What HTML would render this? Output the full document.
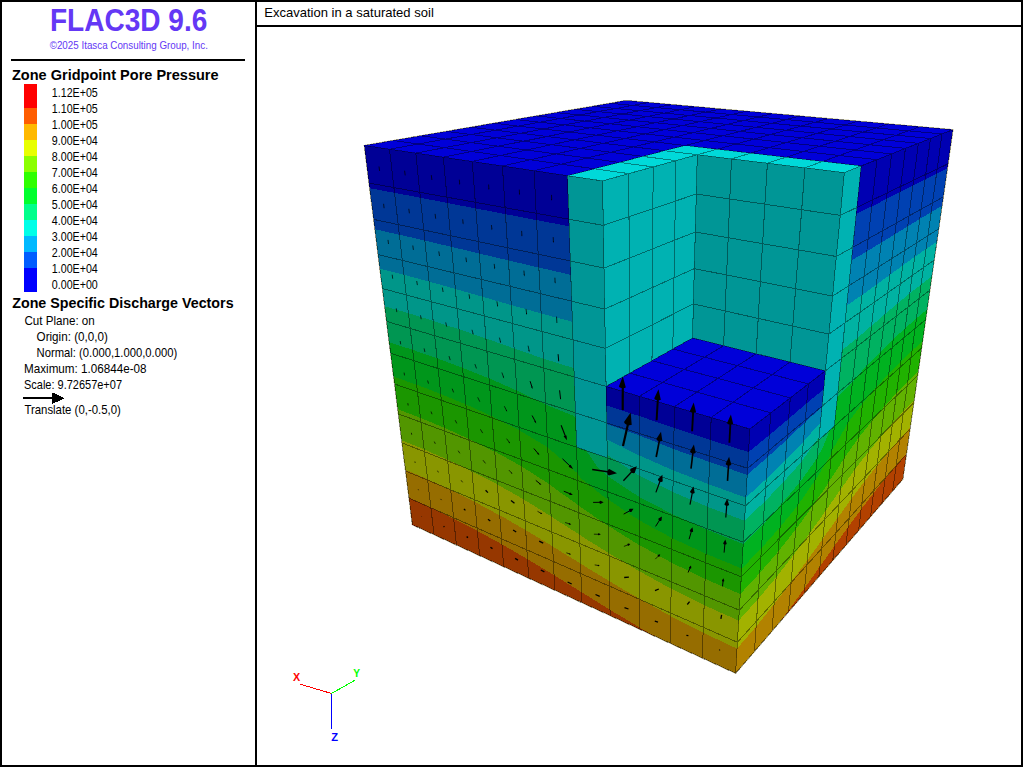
<!DOCTYPE html>
<html lang="en"><head><meta charset="utf-8"><title>Excavation in a saturated soil</title>
<style>html,body{margin:0;padding:0;background:#fff;overflow:hidden}svg{display:block}</style></head>
<body>
<svg width="1024" height="768" viewBox="0 0 1024 768" font-family="'Liberation Sans', sans-serif">
<rect width="1024" height="768" fill="#fff"/>
<g shape-rendering="crispEdges" fill="#000">
<rect x="0" y="0" width="1023" height="2"/><rect x="0" y="765" width="1023" height="2"/>
<rect x="0" y="0" width="2" height="767"/><rect x="1021" y="0" width="2" height="767"/>
<rect x="255" y="0" width="2" height="767"/><rect x="255" y="25" width="768" height="2"/>
<rect x="11" y="59" width="234" height="2"/>
<rect x="24" y="84" width="13" height="24" fill="#ff0000"/>
<rect x="24" y="108" width="13" height="16" fill="#ff5d00"/>
<rect x="24" y="124" width="13" height="16" fill="#ffb900"/>
<rect x="24" y="140" width="13" height="16" fill="#e8ff00"/>
<rect x="24" y="156" width="13" height="16" fill="#8bff00"/>
<rect x="24" y="172" width="13" height="16" fill="#2eff00"/>
<rect x="24" y="188" width="13" height="16" fill="#00ff2e"/>
<rect x="24" y="204" width="13" height="16" fill="#00ff8b"/>
<rect x="24" y="220" width="13" height="16" fill="#00ffe8"/>
<rect x="24" y="236" width="13" height="16" fill="#00b9ff"/>
<rect x="24" y="252" width="13" height="16" fill="#005dff"/>
<rect x="24" y="268" width="13" height="24" fill="#0000ff"/>
<rect x="23" y="397" width="32" height="2"/><path d="M64.6,398.2 L52.2,392.4 L52.2,404Z"/>
</g>
<text x="49.9" y="30.9" font-size="30.6" font-weight="bold" textLength="157.4" lengthAdjust="spacingAndGlyphs" fill="#6438f5">FLAC3D 9.6</text>
<text x="49.7" y="48.9" font-size="10.1" textLength="158.2" lengthAdjust="spacingAndGlyphs" fill="#6438f5">©2025 Itasca Consulting Group, Inc.</text>
<text x="12" y="79.7" font-size="14.8" font-weight="bold" textLength="206.6" lengthAdjust="spacingAndGlyphs" fill="#000">Zone Gridpoint Pore Pressure</text>
<text x="51.8" y="96.7" font-size="12.2" textLength="46" lengthAdjust="spacingAndGlyphs" fill="#000">1.12E+05</text>
<text x="51.8" y="112.7" font-size="12.2" textLength="46" lengthAdjust="spacingAndGlyphs" fill="#000">1.10E+05</text>
<text x="51.8" y="128.7" font-size="12.2" textLength="46" lengthAdjust="spacingAndGlyphs" fill="#000">1.00E+05</text>
<text x="51.8" y="144.7" font-size="12.2" textLength="46" lengthAdjust="spacingAndGlyphs" fill="#000">9.00E+04</text>
<text x="51.8" y="160.7" font-size="12.2" textLength="46" lengthAdjust="spacingAndGlyphs" fill="#000">8.00E+04</text>
<text x="51.8" y="176.7" font-size="12.2" textLength="46" lengthAdjust="spacingAndGlyphs" fill="#000">7.00E+04</text>
<text x="51.8" y="192.7" font-size="12.2" textLength="46" lengthAdjust="spacingAndGlyphs" fill="#000">6.00E+04</text>
<text x="51.8" y="208.7" font-size="12.2" textLength="46" lengthAdjust="spacingAndGlyphs" fill="#000">5.00E+04</text>
<text x="51.8" y="224.7" font-size="12.2" textLength="46" lengthAdjust="spacingAndGlyphs" fill="#000">4.00E+04</text>
<text x="51.8" y="240.7" font-size="12.2" textLength="46" lengthAdjust="spacingAndGlyphs" fill="#000">3.00E+04</text>
<text x="51.8" y="256.7" font-size="12.2" textLength="46" lengthAdjust="spacingAndGlyphs" fill="#000">2.00E+04</text>
<text x="51.8" y="272.7" font-size="12.2" textLength="46" lengthAdjust="spacingAndGlyphs" fill="#000">1.00E+04</text>
<text x="51.8" y="288.7" font-size="12.2" textLength="46" lengthAdjust="spacingAndGlyphs" fill="#000">0.00E+00</text>
<text x="12.2" y="307.8" font-size="14.8" font-weight="bold" textLength="221.4" lengthAdjust="spacingAndGlyphs" fill="#000">Zone Specific Discharge Vectors</text>
<text x="24.4" y="325.3" font-size="12.2" textLength="70.4" lengthAdjust="spacingAndGlyphs" fill="#000">Cut Plane: on</text>
<text x="36.6" y="341" font-size="12.2" textLength="71.2" lengthAdjust="spacingAndGlyphs" fill="#000">Origin: (0,0,0)</text>
<text x="36.6" y="357" font-size="12.2" textLength="140.6" lengthAdjust="spacingAndGlyphs" fill="#000">Normal: (0.000,1.000,0.000)</text>
<text x="24" y="372.9" font-size="12.2" textLength="122.6" lengthAdjust="spacingAndGlyphs" fill="#000">Maximum: 1.06844e-08</text>
<text x="24" y="388.9" font-size="12.2" textLength="98" lengthAdjust="spacingAndGlyphs" fill="#000">Scale: 9.72657e+07</text>
<text x="24.4" y="414.3" font-size="12.2" textLength="96.4" lengthAdjust="spacingAndGlyphs" fill="#000">Translate (0,-0.5,0)</text>
<text x="264.2" y="16.7" font-size="12.2" textLength="169.6" lengthAdjust="spacingAndGlyphs" fill="#000">Excavation in a saturated soil</text>
<g shape-rendering="crispEdges">
<path fill="none" stroke="#d9d5b5" stroke-opacity="0.7" stroke-width="1.8" d="M364.3,145.5 626.3,100.5 952.9,129.7 902.8,479.1 735.6,673.3 412.4,524.7Z"/>
<path fill="#009696" d="M602.5,180.9 567.4,175.7 568.9,219.2 603.3,225.4ZM603.3,225.4 568.9,219.2 570.3,261 604,268.1ZM604,268.1 570.3,261 571.7,301.2 604.7,309.1ZM604.7,309.1 571.7,301.2 573,339.8 605.4,348.5ZM605.4,348.5 573,339.8 574.2,377 606.1,386.4ZM606.1,386.4 574.2,377 575.4,412.8 606.7,422.9ZM606.7,422.9 575.4,412.8 576.6,447.3 607.3,457.9ZM844.3,172.6 804.9,167.8 801.7,209.7 840.3,215.4ZM840.3,215.4 801.7,209.7 798.6,249.9 836.3,256.5ZM836.3,256.5 798.6,249.9 795.6,288.7 832.6,296.1ZM832.6,296.1 795.6,288.7 792.8,326.1 828.9,334.1ZM828.9,334.1 792.8,326.1 790,362 825.4,370.8ZM804.9,167.8 767.4,163.2 764.9,204.2 801.7,209.7ZM801.7,209.7 764.9,204.2 762.6,243.7 798.6,249.9ZM798.6,249.9 762.6,243.7 760.3,281.7 795.6,288.7ZM795.6,288.7 760.3,281.7 758.2,318.4 792.8,326.1ZM792.8,326.1 758.2,318.4 756.1,353.7 790,362ZM767.4,163.2 731.5,158.9 729.8,199 764.9,204.2ZM764.9,204.2 729.8,199 728.2,237.7 762.6,243.7ZM762.6,243.7 728.2,237.7 726.6,275 760.3,281.7ZM760.3,281.7 726.6,275 725.1,311 758.2,318.4ZM758.2,318.4 725.1,311 723.6,345.7 756.1,353.7ZM731.5,158.9 697.3,154.7 696.3,194 729.8,199ZM729.8,199 696.3,194 695.3,232 728.2,237.7ZM728.2,237.7 695.3,232 694.3,268.6 726.6,275ZM726.6,275 694.3,268.6 693.4,303.9 725.1,311ZM725.1,311 693.4,303.9 692.5,338 723.6,345.7Z"/>
<path fill="#00b2b2" d="M844.3,172.6 861.2,165.9 856.9,207.4 840.3,215.4ZM840.3,215.4 856.9,207.4 852.8,247.3 836.3,256.5ZM836.3,256.5 852.8,247.3 848.8,285.8 832.6,296.1ZM832.6,296.1 848.8,285.8 845,322.8 828.9,334.1ZM828.9,334.1 845,322.8 841.4,358.5 825.4,370.8ZM825.4,370.8 841.4,358.5 837.8,392.9 822.1,406.1ZM822.1,406.1 837.8,392.9 834.4,426.2 818.8,440.1ZM602.5,180.9 628.7,173.6 629,216.7 603.3,225.4ZM603.3,225.4 629,216.7 629.2,258.2 604,268.1ZM604,268.1 629.2,258.2 629.4,298 604.7,309.1ZM604.7,309.1 629.4,298 629.6,336.3 605.4,348.5ZM605.4,348.5 629.6,336.3 629.8,373.1 606.1,386.4ZM628.7,173.6 653.2,166.9 652.9,208.7 629,216.7ZM629,216.7 652.9,208.7 652.7,248.8 629.2,258.2ZM629.2,258.2 652.7,248.8 652.4,287.5 629.4,298ZM629.4,298 652.4,287.5 652.2,324.8 629.6,336.3ZM629.6,336.3 652.2,324.8 652,360.7 629.8,373.1ZM653.2,166.9 676,160.6 675.3,201.1 652.9,208.7ZM652.9,208.7 675.3,201.1 674.7,240.1 652.7,248.8ZM652.7,248.8 674.7,240.1 674,277.8 652.4,287.5ZM652.4,287.5 674,277.8 673.4,314 652.2,324.8ZM652.2,324.8 673.4,314 672.8,349 652,360.7ZM676,160.6 697.3,154.7 696.3,194 675.3,201.1ZM675.3,201.1 696.3,194 695.3,232 674.7,240.1ZM674.7,240.1 695.3,232 694.3,268.6 674,277.8ZM674,277.8 694.3,268.6 693.4,303.9 673.4,314ZM673.4,314 693.4,303.9 692.5,338 672.8,349Z"/>
<path fill="#00d9d9" d="M844.3,172.6 804.9,167.8 822.7,161.4 861.2,165.9ZM804.9,167.8 767.4,163.2 786,157.2 822.7,161.4ZM767.4,163.2 731.5,158.9 750.9,153.1 786,157.2ZM731.5,158.9 697.3,154.7 717.3,149.2 750.9,153.1ZM602.5,180.9 567.4,175.7 594.3,168.8 628.7,173.6ZM628.7,173.6 594.3,168.8 619.3,162.4 653.2,166.9ZM653.2,166.9 619.3,162.4 642.7,156.4 676,160.6ZM676,160.6 642.7,156.4 664.6,150.7 697.3,154.7ZM697.3,154.7 664.6,150.7 685.2,145.5 717.3,149.2Z"/>
<path fill="#000096" d="M749.9,429 711.2,417.5 709.8,456.1 747.6,468.3ZM711.2,417.5 674.4,406.7 673.8,444.5 709.8,456.1ZM674.4,406.7 639.4,396.3 639.4,433.4 673.8,444.5ZM639.4,396.3 606.1,386.4 606.7,422.9 639.4,433.4ZM567.4,175.7 534.1,170.7 536.2,213.3 568.9,219.2ZM568.9,219.2 536.2,213.3 538.2,254.2 570.3,261ZM534.1,170.7 502.4,166 505.1,207.7 536.2,213.3ZM536.2,213.3 505.1,207.7 507.6,247.8 538.2,254.2ZM502.4,166 472.2,161.5 475.3,202.3 505.1,207.7ZM505.1,207.7 475.3,202.3 478.4,241.6 507.6,247.8ZM472.2,161.5 443.3,157.2 447,197.2 475.3,202.3ZM475.3,202.3 447,197.2 450.5,235.7 478.4,241.6ZM443.3,157.2 415.8,153.1 419.8,192.3 447,197.2ZM447,197.2 419.8,192.3 423.8,230 450.5,235.7ZM415.8,153.1 389.5,149.2 393.9,187.6 419.8,192.3ZM419.8,192.3 393.9,187.6 398.2,224.6 423.8,230ZM389.5,149.2 364.3,145.5 369,183.1 393.9,187.6ZM393.9,187.6 369,183.1 373.7,219.4 398.2,224.6Z"/>
<path fill="#0000b2" d="M749.9,429 770.8,412.9 768.2,451.1 747.6,468.3ZM770.8,412.9 790.3,397.9 787.3,435.1 768.2,451.1ZM790.3,397.9 808.4,383.9 805.3,420.1 787.3,435.1ZM808.4,383.9 825.4,370.8 822.1,406.1 805.3,420.1ZM861.2,165.9 876.9,159.7 872.5,199.9 856.9,207.4ZM856.9,207.4 872.5,199.9 868.2,238.7 852.8,247.3ZM876.9,159.7 891.6,153.9 887.1,193 872.5,199.9ZM872.5,199.9 887.1,193 882.7,230.7 868.2,238.7ZM891.6,153.9 905.4,148.4 900.7,186.4 887.1,193ZM887.1,193 900.7,186.4 896.3,223.1 882.7,230.7ZM905.4,148.4 918.4,143.3 913.6,180.2 900.7,186.4ZM900.7,186.4 913.6,180.2 909,215.9 896.3,223.1ZM918.4,143.3 930.5,138.5 925.7,174.4 913.6,180.2ZM913.6,180.2 925.7,174.4 921.1,209.2 909,215.9ZM930.5,138.5 942,133.9 937.2,169 925.7,174.4ZM925.7,174.4 937.2,169 932.5,202.9 921.1,209.2ZM942,133.9 952.9,129.7 948,163.8 937.2,169ZM937.2,169 948,163.8 943.3,196.9 932.5,202.9Z"/>
<path fill="#0000d9" d="M861.2,165.9 822.7,161.4 839.3,155.5 876.9,159.7ZM876.9,159.7 839.3,155.5 854.9,150 891.6,153.9ZM891.6,153.9 854.9,150 869.5,144.7 905.4,148.4ZM905.4,148.4 869.5,144.7 883.3,139.8 918.4,143.3ZM918.4,143.3 883.3,139.8 896.2,135.2 930.5,138.5ZM930.5,138.5 896.2,135.2 908.4,130.9 942,133.9ZM942,133.9 908.4,130.9 920,126.7 952.9,129.7ZM822.7,161.4 786,157.2 803.4,151.5 839.3,155.5ZM839.3,155.5 803.4,151.5 819.7,146.2 854.9,150ZM854.9,150 819.7,146.2 835.1,141.2 869.5,144.7ZM869.5,144.7 835.1,141.2 849.6,136.5 883.3,139.8ZM883.3,139.8 849.6,136.5 863.2,132.1 896.2,135.2ZM896.2,135.2 863.2,132.1 876.1,127.9 908.4,130.9ZM908.4,130.9 876.1,127.9 888.3,123.9 920,126.7ZM786,157.2 750.9,153.1 769,147.7 803.4,151.5ZM803.4,151.5 769,147.7 786.1,142.6 819.7,146.2ZM819.7,146.2 786.1,142.6 802.1,137.8 835.1,141.2ZM835.1,141.2 802.1,137.8 817.2,133.3 849.6,136.5ZM849.6,136.5 817.2,133.3 831.5,129 863.2,132.1ZM863.2,132.1 831.5,129 845,125 876.1,127.9ZM876.1,127.9 845,125 857.8,121.2 888.3,123.9ZM750.9,153.1 717.3,149.2 736.1,144 769,147.7ZM769,147.7 736.1,144 753.8,139.1 786.1,142.6ZM786.1,142.6 753.8,139.1 770.4,134.6 802.1,137.8ZM802.1,137.8 770.4,134.6 786.1,130.2 817.2,133.3ZM817.2,133.3 786.1,130.2 801,126.1 831.5,129ZM831.5,129 801,126.1 815.1,122.2 845,125ZM845,125 815.1,122.2 828.4,118.6 857.8,121.2ZM717.3,149.2 685.2,145.5 704.6,140.5 736.1,144ZM736.1,144 704.6,140.5 722.8,135.8 753.8,139.1ZM753.8,139.1 722.8,135.8 740,131.4 770.4,134.6ZM770.4,134.6 740,131.4 756.2,127.3 786.1,130.2ZM786.1,130.2 756.2,127.3 771.6,123.3 801,126.1ZM801,126.1 771.6,123.3 786.2,119.6 815.1,122.2ZM815.1,122.2 786.2,119.6 800,116 828.4,118.6ZM567.4,175.7 534.1,170.7 561.5,164.2 594.3,168.8ZM594.3,168.8 561.5,164.2 587,158 619.3,162.4ZM619.3,162.4 587,158 610.9,152.3 642.7,156.4ZM642.7,156.4 610.9,152.3 633.4,146.9 664.6,150.7ZM664.6,150.7 633.4,146.9 654.4,141.9 685.2,145.5ZM685.2,145.5 654.4,141.9 674.3,137.1 704.6,140.5ZM704.6,140.5 674.3,137.1 693,132.7 722.8,135.8ZM722.8,135.8 693,132.7 710.7,128.4 740,131.4ZM740,131.4 710.7,128.4 727.4,124.4 756.2,127.3ZM756.2,127.3 727.4,124.4 743.3,120.6 771.6,123.3ZM771.6,123.3 743.3,120.6 758.3,117 786.2,119.6ZM786.2,119.6 758.3,117 772.6,113.6 800,116ZM534.1,170.7 502.4,166 530.2,159.8 561.5,164.2ZM561.5,164.2 530.2,159.8 556.2,153.9 587,158ZM587,158 556.2,153.9 580.5,148.4 610.9,152.3ZM610.9,152.3 580.5,148.4 603.4,143.3 633.4,146.9ZM633.4,146.9 603.4,143.3 624.9,138.5 654.4,141.9ZM654.4,141.9 624.9,138.5 645.2,133.9 674.3,137.1ZM674.3,137.1 645.2,133.9 664.4,129.6 693,132.7ZM693,132.7 664.4,129.6 682.5,125.5 710.7,128.4ZM710.7,128.4 682.5,125.5 699.7,121.7 727.4,124.4ZM727.4,124.4 699.7,121.7 716,118 743.3,120.6ZM743.3,120.6 716,118 731.4,114.5 758.3,117ZM758.3,117 731.4,114.5 746.2,111.2 772.6,113.6ZM502.4,166 472.2,161.5 500.3,155.5 530.2,159.8ZM530.2,159.8 500.3,155.5 526.7,150 556.2,153.9ZM556.2,153.9 526.7,150 551.4,144.7 580.5,148.4ZM580.5,148.4 551.4,144.7 574.7,139.8 603.4,143.3ZM603.4,143.3 574.7,139.8 596.6,135.2 624.9,138.5ZM624.9,138.5 596.6,135.2 617.3,130.8 645.2,133.9ZM645.2,133.9 617.3,130.8 636.9,126.7 664.4,129.6ZM664.4,129.6 636.9,126.7 655.4,122.7 682.5,125.5ZM682.5,125.5 655.4,122.7 673,119 699.7,121.7ZM699.7,121.7 673,119 689.6,115.5 716,118ZM716,118 689.6,115.5 705.5,112.1 731.4,114.5ZM731.4,114.5 705.5,112.1 720.6,109 746.2,111.2ZM472.2,161.5 443.3,157.2 471.8,151.5 500.3,155.5ZM500.3,155.5 471.8,151.5 498.4,146.2 526.7,150ZM526.7,150 498.4,146.2 523.5,141.2 551.4,144.7ZM551.4,144.7 523.5,141.2 547.1,136.5 574.7,139.8ZM574.7,139.8 547.1,136.5 569.4,132 596.6,135.2ZM596.6,135.2 569.4,132 590.5,127.8 617.3,130.8ZM617.3,130.8 590.5,127.8 610.4,123.8 636.9,126.7ZM636.9,126.7 610.4,123.8 629.3,120.1 655.4,122.7ZM655.4,122.7 629.3,120.1 647.2,116.5 673,119ZM673,119 647.2,116.5 664.2,113.1 689.6,115.5ZM689.6,115.5 664.2,113.1 680.4,109.8 705.5,112.1ZM705.5,112.1 680.4,109.8 695.8,106.7 720.6,109ZM443.3,157.2 415.8,153.1 444.5,147.7 471.8,151.5ZM471.8,151.5 444.5,147.7 471.4,142.6 498.4,146.2ZM498.4,146.2 471.4,142.6 496.8,137.8 523.5,141.2ZM523.5,141.2 496.8,137.8 520.7,133.3 547.1,136.5ZM547.1,136.5 520.7,133.3 543.3,129 569.4,132ZM569.4,132 543.3,129 564.6,124.9 590.5,127.8ZM590.5,127.8 564.6,124.9 584.8,121.1 610.4,123.8ZM610.4,123.8 584.8,121.1 604,117.5 629.3,120.1ZM629.3,120.1 604,117.5 622.3,114 647.2,116.5ZM647.2,116.5 622.3,114 639.6,110.7 664.2,113.1ZM664.2,113.1 639.6,110.7 656.1,107.6 680.4,109.8ZM680.4,109.8 656.1,107.6 671.9,104.6 695.8,106.7ZM415.8,153.1 389.5,149.2 418.3,144 444.5,147.7ZM444.5,147.7 418.3,144 445.5,139.1 471.4,142.6ZM471.4,142.6 445.5,139.1 471.1,134.5 496.8,137.8ZM496.8,137.8 471.1,134.5 495.3,130.2 520.7,133.3ZM520.7,133.3 495.3,130.2 518.1,126.1 543.3,129ZM543.3,129 518.1,126.1 539.7,122.2 564.6,124.9ZM564.6,124.9 539.7,122.2 560.2,118.5 584.8,121.1ZM584.8,121.1 560.2,118.5 579.7,115 604,117.5ZM604,117.5 579.7,115 598.2,111.6 622.3,114ZM622.3,114 598.2,111.6 615.9,108.5 639.6,110.7ZM639.6,110.7 615.9,108.5 632.7,105.4 656.1,107.6ZM656.1,107.6 632.7,105.4 648.7,102.5 671.9,104.6ZM389.5,149.2 364.3,145.5 393.3,140.5 418.3,144ZM418.3,144 393.3,140.5 420.6,135.8 445.5,139.1ZM445.5,139.1 420.6,135.8 446.4,131.4 471.1,134.5ZM471.1,134.5 446.4,131.4 470.8,127.2 495.3,130.2ZM495.3,130.2 470.8,127.2 493.9,123.2 518.1,126.1ZM518.1,126.1 493.9,123.2 515.7,119.5 539.7,122.2ZM539.7,122.2 515.7,119.5 536.5,115.9 560.2,118.5ZM560.2,118.5 536.5,115.9 556.2,112.6 579.7,115ZM579.7,115 556.2,112.6 575,109.3 598.2,111.6ZM598.2,111.6 575,109.3 592.9,106.3 615.9,108.5ZM615.9,108.5 592.9,106.3 610,103.3 632.7,105.4ZM632.7,105.4 610,103.3 626.3,100.5 648.7,102.5ZM749.9,429 711.2,417.5 733,402.2 770.8,412.9ZM770.8,412.9 733,402.2 753.3,387.9 790.3,397.9ZM790.3,397.9 753.3,387.9 772.2,374.6 808.4,383.9ZM808.4,383.9 772.2,374.6 790,362 825.4,370.8ZM711.2,417.5 674.4,406.7 696.9,392.1 733,402.2ZM733,402.2 696.9,392.1 718,378.4 753.3,387.9ZM753.3,387.9 718,378.4 737.6,365.7 772.2,374.6ZM772.2,374.6 737.6,365.7 756.1,353.7 790,362ZM674.4,406.7 639.4,396.3 662.6,382.4 696.9,392.1ZM696.9,392.1 662.6,382.4 684.2,369.4 718,378.4ZM718,378.4 684.2,369.4 704.5,357.2 737.6,365.7ZM737.6,365.7 704.5,357.2 723.6,345.7 756.1,353.7ZM639.4,396.3 606.1,386.4 629.8,373.1 662.6,382.4ZM662.6,382.4 629.8,373.1 652,360.7 684.2,369.4ZM684.2,369.4 652,360.7 672.8,349 704.5,357.2ZM704.5,357.2 672.8,349 692.5,338 723.6,345.7Z"/>
<path fill="#003796" d="M710.4,440 709.8,456.1 726.2,445ZM709.8,456.1 747.6,468.3 732.3,446.9 726.2,445ZM747.6,468.3 748.5,452.1 732.3,446.9ZM747.6,468.3 709.8,456.1 708.4,493 745.4,505.9ZM674,428 673.8,444.5 689.6,433.1ZM673.8,444.5 709.8,456.1 694.5,434.8 689.6,433.1ZM709.8,456.1 710.4,440 694.5,434.8ZM709.8,456.1 673.8,444.5 673.1,480.8 708.4,493ZM639.4,416.1 639.4,433.4 655.1,421.4ZM639.4,433.4 673.8,444.5 658.1,422.5 655.1,421.4ZM673.8,444.5 674,428 658.1,422.5ZM673.8,444.5 639.4,433.4 639.4,469.1 673.1,480.8ZM606.4,405.5 606.7,422.9 622,410.5ZM606.7,422.9 639.4,433.4 623.5,411 622,410.5ZM639.4,433.4 639.4,416.1 623.5,411ZM639.4,433.4 606.7,422.9 607.3,457.9 639.4,469.1ZM541.8,221.1 553.2,237.1 563.6,225.2ZM536.5,220.1 538.2,254.2 553.2,237.1 541.8,221.1ZM538.2,254.2 570.3,261 553.2,237.1ZM570.3,261 569.1,226.2 563.6,225.2 553.2,237.1ZM570.3,261 538.2,254.2 540.2,293.6 571.7,301.2ZM510.4,215.1 521.6,230.9 531.4,219.1ZM505.5,214.2 507.6,247.8 521.6,230.9 510.4,215.1ZM507.6,247.8 538.2,254.2 521.6,230.9ZM538.2,254.2 536.5,220.1 531.4,219.1 521.6,230.9ZM538.2,254.2 507.6,247.8 510.1,286.3 540.2,293.6ZM480.3,209.3 491.4,225 500.7,213.2ZM475.8,208.4 478.4,241.6 491.4,225 480.3,209.3ZM478.4,241.6 507.6,247.8 491.4,225ZM507.6,247.8 505.5,214.2 500.7,213.2 491.4,225ZM507.6,247.8 478.4,241.6 481.3,279.4 510.1,286.3ZM451.6,203.8 462.7,219.3 471.4,207.6ZM447.5,203 450.5,235.7 462.7,219.3 451.6,203.8ZM450.5,235.7 478.4,241.6 462.7,219.3ZM478.4,241.6 475.8,208.4 471.4,207.6 462.7,219.3ZM478.4,241.6 450.5,235.7 453.9,272.8 481.3,279.4ZM424.2,198.5 435.1,213.9 443.4,202.2ZM420.4,197.8 423.8,230 435.1,213.9 424.2,198.5ZM423.8,230 450.5,235.7 435.1,213.9ZM450.5,235.7 447.5,203 443.4,202.2 435.1,213.9ZM450.5,235.7 423.8,230 427.5,266.5 453.9,272.8ZM398.1,193.5 408.8,208.8 416.7,197ZM394.5,192.8 398.2,224.6 408.8,208.8 398.1,193.5ZM398.2,224.6 423.8,230 408.8,208.8ZM423.8,230 420.4,197.8 416.7,197 408.8,208.8ZM423.8,230 398.2,224.6 402.3,260.4 427.5,266.5ZM373.1,188.8 383.6,203.8 391,192.2ZM369.7,188.2 373.7,219.4 383.6,203.8 373.1,188.8ZM373.7,219.4 398.2,224.6 383.6,203.8ZM398.2,224.6 394.5,192.8 391,192.2 383.6,203.8ZM398.2,224.6 373.7,219.4 378.1,254.6 402.3,260.4Z"/>
<path fill="#0041b2" d="M769.3,435.1 768.2,451.1 760.7,442.1ZM768.2,451.1 747.6,468.3 757.4,444.8 760.7,442.1ZM747.6,468.3 748.5,452.1 757.4,444.8ZM747.6,468.3 768.2,451.1 765.6,487.8 745.4,505.9ZM788.6,418.8 787.3,435.1 780.4,425.7ZM787.3,435.1 768.2,451.1 777.7,428 780.4,425.7ZM768.2,451.1 769.3,435.1 777.7,428ZM768.2,451.1 787.3,435.1 784.5,470.8 765.6,487.8ZM806.7,403.2 805.3,420.1 798.6,410.2ZM805.3,420.1 787.3,435.1 797,411.6 798.6,410.2ZM787.3,435.1 788.6,418.8 797,411.6ZM787.3,435.1 805.3,420.1 802.2,455 784.5,470.8ZM823.7,389.3 822.1,406.1 815.7,395.8ZM822.1,406.1 805.3,420.1 814.9,396.4 815.7,395.8ZM805.3,420.1 806.7,403.2 814.9,396.4ZM805.3,420.1 822.1,406.1 818.8,440.1 802.2,455ZM869.3,207.6 862.7,223.5 858.9,212.8ZM871.8,206.4 868.2,238.7 862.7,223.5 869.3,207.6ZM868.2,238.7 852.8,247.3 862.7,223.5ZM852.8,247.3 856.2,214.1 858.9,212.8 862.7,223.5ZM852.8,247.3 868.2,238.7 864.1,276.1 848.8,285.8ZM884.1,200.2 877.7,215.7 874.2,205.2ZM886.3,199.1 882.7,230.7 877.7,215.7 884.1,200.2ZM882.7,230.7 868.2,238.7 877.7,215.7ZM868.2,238.7 871.8,206.4 874.2,205.2 877.7,215.7ZM868.2,238.7 882.7,230.7 878.4,267 864.1,276.1ZM898,193.2 891.8,208.4 888.6,197.9ZM900,192.1 896.3,223.1 891.8,208.4 898,193.2ZM896.3,223.1 882.7,230.7 891.8,208.4ZM882.7,230.7 886.3,199.1 888.6,197.9 891.8,208.4ZM882.7,230.7 896.3,223.1 891.9,258.5 878.4,267ZM911.1,186.6 905,201.5 902.1,191.1ZM912.9,185.6 909,215.9 905,201.5 911.1,186.6ZM909,215.9 896.3,223.1 905,201.5ZM896.3,223.1 900,192.1 902.1,191.1 905,201.5ZM896.3,223.1 909,215.9 904.6,250.5 891.9,258.5ZM923.4,180.4 917.4,195.1 914.8,184.7ZM925.1,179.5 921.1,209.2 917.4,195.1 923.4,180.4ZM921.1,209.2 909,215.9 917.4,195.1ZM909,215.9 912.9,185.6 914.8,184.7 917.4,195.1ZM909,215.9 921.1,209.2 916.6,242.9 904.6,250.5ZM935,174.6 929.2,189 926.7,178.6ZM936.5,173.8 932.5,202.9 929.2,189 935,174.6ZM932.5,202.9 921.1,209.2 929.2,189ZM921.1,209.2 925.1,179.5 926.7,178.6 929.2,189ZM921.1,209.2 932.5,202.9 927.9,235.7 916.6,242.9ZM945.9,169.2 940.3,183.2 938.1,173ZM947.3,168.4 943.3,196.9 940.3,183.2 945.9,169.2ZM943.3,196.9 932.5,202.9 940.3,183.2ZM932.5,202.9 936.5,173.8 938.1,173 940.3,183.2ZM932.5,202.9 943.3,196.9 938.7,228.9 927.9,235.7Z"/>
<path fill="#006d96" d="M715.5,464.1 727.5,480.9 740.7,472.6ZM709.5,462.1 708.4,493 727.5,480.9 715.5,464.1ZM708.4,493 745.4,505.9 727.5,480.9ZM745.4,505.9 747.2,474.8 740.7,472.6 727.5,480.9ZM678.2,450.7 691,468.7 704,460ZM673.7,449 673.1,480.8 691,468.7 678.2,450.7ZM673.1,480.8 708.4,493 691,468.7ZM708.4,493 709.5,462.1 704,460 691,468.7ZM641.6,436.4 656.2,457 669.7,447.4ZM639.4,435.5 639.4,469.1 656.2,457 641.6,436.4ZM639.4,469.1 673.1,480.8 656.2,457ZM673.1,480.8 673.7,449 669.7,447.4 656.2,457ZM607.9,424.5 623,445.9 637.7,434.7ZM606.7,424 607.3,457.9 623,445.9 607.9,424.5ZM607.3,457.9 639.4,469.1 623,445.9ZM639.4,469.1 639.4,435.5 637.7,434.7 623,445.9ZM549.4,269.9 554.9,277.7 559.9,272.3ZM538.9,267.6 540.2,293.6 554.9,277.7 549.4,269.9ZM540.2,293.6 571.7,301.2 554.9,277.7ZM571.7,301.2 570.8,274.8 559.9,272.3 554.9,277.7ZM571.7,301.2 540.2,293.6 542,331.5 573,339.8ZM518.3,262.7 523.9,270.6 528.7,265.1ZM508.4,260.4 510.1,286.3 523.9,270.6 518.3,262.7ZM510.1,286.3 540.2,293.6 523.9,270.6ZM540.2,293.6 538.9,267.6 528.7,265.1 523.9,270.6ZM540.2,293.6 510.1,286.3 512.5,323.5 542,331.5ZM488.4,255.7 494.2,263.9 499,258.2ZM479.3,253.5 481.3,279.4 494.2,263.9 488.4,255.7ZM481.3,279.4 510.1,286.3 494.2,263.9ZM510.1,286.3 508.4,260.4 499,258.2 494.2,263.9ZM510.1,286.3 481.3,279.4 484.2,315.9 512.5,323.5ZM459.7,248.8 465.9,257.5 470.7,251.4ZM451.5,246.8 453.9,272.8 465.9,257.5 459.7,248.8ZM453.9,272.8 481.3,279.4 465.9,257.5ZM481.3,279.4 479.3,253.5 470.7,251.4 465.9,257.5ZM481.3,279.4 453.9,272.8 457.1,308.6 484.2,315.9ZM432.4,242.4 438.8,251.4 443.6,245ZM424.8,240.6 427.5,266.5 438.8,251.4 432.4,242.4ZM427.5,266.5 453.9,272.8 438.8,251.4ZM453.9,272.8 451.5,246.8 443.6,245 438.8,251.4ZM453.9,272.8 427.5,266.5 431.2,301.7 457.1,308.6ZM406.4,236.3 412.8,245.5 417.5,238.9ZM399.3,234.7 402.3,260.4 412.8,245.5 406.4,236.3ZM402.3,260.4 427.5,266.5 412.8,245.5ZM427.5,266.5 424.8,240.6 417.5,238.9 412.8,245.5ZM427.5,266.5 402.3,260.4 406.3,295 431.2,301.7ZM381.6,230.7 388,239.9 392.5,233.2ZM374.9,229.2 378.1,254.6 388,239.9 381.6,230.7ZM378.1,254.6 402.3,260.4 388,239.9ZM402.3,260.4 399.3,234.7 392.5,233.2 388,239.9ZM402.3,260.4 378.1,254.6 382.4,288.5 406.3,295Z"/>
<path fill="#0082b2" d="M764.5,459.8 756.9,478.3 750.8,471.7ZM767.8,457 765.6,487.8 756.9,478.3 764.5,459.8ZM765.6,487.8 745.4,505.9 756.9,478.3ZM745.4,505.9 747.2,474.8 750.8,471.7 756.9,478.3ZM784.6,441.8 776.6,461.2 770.8,454.2ZM787,439.6 784.5,470.8 776.6,461.2 784.6,441.8ZM784.5,470.8 765.6,487.8 776.6,461.2ZM765.6,487.8 767.8,457 770.8,454.2 776.6,461.2ZM804,423.3 795,445.3 789.1,437.4ZM805.1,422.2 802.2,455 795,445.3 804,423.3ZM802.2,455 784.5,470.8 795,445.3ZM784.5,470.8 787,439.6 789.1,437.4 795,445.3ZM821.3,407.8 812.2,430.4 806,421.2ZM821.9,407.2 818.8,440.1 812.2,430.4 821.3,407.8ZM818.8,440.1 802.2,455 812.2,430.4ZM802.2,455 805.1,422.2 806,421.2 812.2,430.4ZM861.8,254.4 858.6,262.1 856.7,257.3ZM866.8,251.4 864.1,276.1 858.6,262.1 861.8,254.4ZM864.1,276.1 848.8,285.8 858.6,262.1ZM848.8,285.8 851.4,260.5 856.7,257.3 858.6,262.1ZM848.8,285.8 864.1,276.1 860.1,312.2 845,322.8ZM876.6,245.4 873.4,253.2 871.7,248.4ZM881.3,242.6 878.4,267 873.4,253.2 876.6,245.4ZM878.4,267 864.1,276.1 873.4,253.2ZM864.1,276.1 866.8,251.4 871.7,248.4 873.4,253.2ZM864.1,276.1 878.4,267 874.3,302.2 860.1,312.2ZM890.7,236.8 887.4,244.9 885.7,239.8ZM894.9,234.2 891.9,258.5 887.4,244.9 890.7,236.8ZM891.9,258.5 878.4,267 887.4,244.9ZM878.4,267 881.3,242.6 885.7,239.8 887.4,244.9ZM878.4,267 891.9,258.5 887.7,292.8 874.3,302.2ZM903.9,228.7 900.5,237.1 898.9,231.7ZM907.7,226.3 904.6,250.5 900.5,237.1 903.9,228.7ZM904.6,250.5 891.9,258.5 900.5,237.1ZM891.9,258.5 894.9,234.2 898.9,231.7 900.5,237.1ZM891.9,258.5 904.6,250.5 900.3,283.9 887.7,292.8ZM916.4,221 912.9,229.7 911.3,224.1ZM919.8,218.9 916.6,242.9 912.9,229.7 916.4,221ZM916.6,242.9 904.6,250.5 912.9,229.7ZM904.6,250.5 907.7,226.3 911.3,224.1 912.9,229.7ZM904.6,250.5 916.6,242.9 912.2,275.5 900.3,283.9ZM928.1,214 924.6,222.8 923.1,217ZM931.2,212.1 927.9,235.7 924.6,222.8 928.1,214ZM927.9,235.7 916.6,242.9 924.6,222.8ZM916.6,242.9 919.8,218.9 923.1,217 924.6,222.8ZM916.6,242.9 927.9,235.7 923.5,267.6 912.2,275.5ZM939.1,207.5 935.7,216.2 934.3,210.3ZM942,205.8 938.7,228.9 935.7,216.2 939.1,207.5ZM938.7,228.9 927.9,235.7 935.7,216.2ZM927.9,235.7 931.2,212.1 934.3,210.3 935.7,216.2ZM927.9,235.7 938.7,228.9 934.2,260 923.5,267.6Z"/>
<path fill="#009689" d="M708.7,484.3 708.4,493 717.4,487.3ZM708.4,493 745.4,505.9 737.2,494.5 717.4,487.3ZM745.4,505.9 745.9,497.5 737.2,494.5ZM745.4,505.9 708.4,493 707,528.6 743.3,542.1ZM673.3,470.3 673.1,480.8 683,474.1ZM673.1,480.8 708.4,493 699.6,480.7 683,474.1ZM708.4,493 708.7,484.3 699.6,480.7ZM708.4,493 673.1,480.8 672.5,515.7 707,528.6ZM639.4,455.5 639.4,469.1 651.3,460.6ZM639.4,469.1 673.1,480.8 662.3,465.6 651.3,460.6ZM673.1,480.8 673.3,470.3 662.3,465.6ZM673.1,480.8 639.4,469.1 639.5,503.5 672.5,515.7ZM607,439.8 607.3,457.9 622,446.7ZM607.3,457.9 639.4,469.1 624.7,448.3 622,446.7ZM639.4,469.1 639.4,455.5 624.7,448.3ZM639.4,469.1 607.3,457.9 607.9,491.8 639.5,503.5ZM541.1,313.5 542,331.5 555.8,317.4ZM542,331.5 573,339.8 557.4,317.8 555.8,317.4ZM573,339.8 572.4,321.8 557.4,317.8ZM573,339.8 542,331.5 543.8,368 574.2,377ZM511.3,305.1 512.5,323.5 525.8,309.1ZM512.5,323.5 542,331.5 526.3,309.3 525.8,309.1ZM542,331.5 541.1,313.5 526.3,309.3ZM542,331.5 512.5,323.5 514.8,359.4 543.8,368ZM496.4,300.8 496.9,301.4 497.3,301ZM482.7,296.8 484.2,315.9 496.9,301.4 496.4,300.8ZM484.2,315.9 512.5,323.5 496.9,301.4ZM512.5,323.5 511.3,305.1 497.3,301 496.9,301.4ZM512.5,323.5 484.2,315.9 486.9,351.1 514.8,359.4ZM467.7,292.5 469,294.3 470,293.1ZM455.3,288.9 457.1,308.6 469,294.3 467.7,292.5ZM457.1,308.6 484.2,315.9 469,294.3ZM484.2,315.9 482.7,296.8 470,293.1 469,294.3ZM484.2,315.9 457.1,308.6 460.3,343.2 486.9,351.1ZM440.4,284.7 442.3,287.5 443.7,285.7ZM429.1,281.6 431.2,301.7 442.3,287.5 440.4,284.7ZM431.2,301.7 457.1,308.6 442.3,287.5ZM457.1,308.6 455.3,288.9 443.7,285.7 442.3,287.5ZM457.1,308.6 431.2,301.7 434.7,335.7 460.3,343.2ZM414.4,277.6 416.7,281 418.4,278.7ZM404,274.8 406.3,295 416.7,281 414.4,277.6ZM406.3,295 431.2,301.7 416.7,281ZM431.2,301.7 429.1,281.6 418.4,278.7 416.7,281ZM431.2,301.7 406.3,295 410.2,328.4 434.7,335.7ZM389.7,271.1 392.2,274.7 394,272.2ZM379.9,268.6 382.4,288.5 392.2,274.7 389.7,271.1ZM382.4,288.5 406.3,295 392.2,274.7ZM406.3,295 404,274.8 394,272.2 392.2,274.7ZM406.3,295 382.4,288.5 386.6,321.4 410.2,328.4Z"/>
<path fill="#00b2a2" d="M766.2,479 765.6,487.8 761.5,483.3ZM765.6,487.8 745.4,505.9 750.7,493.2 761.5,483.3ZM745.4,505.9 745.9,497.5 750.7,493.2ZM745.4,505.9 765.6,487.8 763.2,523 743.3,542.1ZM785.3,460.5 784.5,470.8 780.1,465.5ZM784.5,470.8 765.6,487.8 771.2,474.3 780.1,465.5ZM765.6,487.8 766.2,479 771.2,474.3ZM765.6,487.8 784.5,470.8 781.8,505.3 763.2,523ZM803.4,441.7 802.2,455 797.1,448.2ZM802.2,455 784.5,470.8 791.2,454.5 797.1,448.2ZM784.5,470.8 785.3,460.5 791.2,454.5ZM784.5,470.8 802.2,455 799.3,488.6 781.8,505.3ZM820.5,422.5 818.8,440.1 812.6,431ZM818.8,440.1 802.2,455 811.2,432.9 812.6,431ZM802.2,455 803.4,441.7 811.2,432.9ZM802.2,455 818.8,440.1 815.7,473 799.3,488.6ZM862,295 860.1,312.2 854.9,299.9ZM860.1,312.2 845,322.8 854.2,300.5 854.9,299.9ZM845,322.8 846.8,305.5 854.2,300.5ZM845,322.8 860.1,312.2 856.3,347 841.4,358.5ZM876.4,284.7 874.3,302.2 869.4,289.7ZM874.3,302.2 860.1,312.2 869.2,289.9 869.4,289.7ZM860.1,312.2 862,295 869.2,289.9ZM860.1,312.2 874.3,302.2 870.4,336.1 856.3,347ZM883.4,279.5 883.2,280.2 883,279.8ZM889.9,274.8 887.7,292.8 883.2,280.2 883.4,279.5ZM887.7,292.8 874.3,302.2 883.2,280.2ZM874.3,302.2 876.4,284.7 883,279.8 883.2,280.2ZM874.3,302.2 887.7,292.8 883.6,325.9 870.4,336.1ZM896.9,269.7 896.2,271.5 895.9,270.4ZM902.7,265.5 900.3,283.9 896.2,271.5 896.9,269.7ZM900.3,283.9 887.7,292.8 896.2,271.5ZM887.7,292.8 889.9,274.8 895.9,270.4 896.2,271.5ZM887.7,292.8 900.3,283.9 896.2,316.2 883.6,325.9ZM909.6,260.6 908.5,263.3 908,261.7ZM914.7,256.9 912.2,275.5 908.5,263.3 909.6,260.6ZM912.2,275.5 900.3,283.9 908.5,263.3ZM900.3,283.9 902.7,265.5 908,261.7 908.5,263.3ZM900.3,283.9 912.2,275.5 908,307.1 896.2,316.2ZM921.4,252.2 920.1,255.5 919.6,253.5ZM926.1,249 923.5,267.6 920.1,255.5 921.4,252.2ZM923.5,267.6 912.2,275.5 920.1,255.5ZM912.2,275.5 914.7,256.9 919.6,253.5 920.1,255.5ZM912.2,275.5 923.5,267.6 919.2,298.4 908,307.1ZM932.5,244.7 931.1,248.1 930.6,246ZM936.8,241.8 934.2,260 931.1,248.1 932.5,244.7ZM934.2,260 923.5,267.6 931.1,248.1ZM923.5,267.6 926.1,249 930.6,246 931.1,248.1ZM923.5,267.6 934.2,260 929.9,290.2 919.2,298.4Z"/>
<path fill="#009652" d="M722,512.2 725.8,517.5 729.8,515.1ZM707.8,506.9 707,528.6 725.8,517.5 722,512.2ZM707,528.6 743.3,542.1 725.8,517.5ZM743.3,542.1 744.5,520.7 729.8,515.1 725.8,517.5ZM743.3,542.1 707,528.6 705.7,562.8 741.3,576.8ZM684.6,497.1 690,504.6 695.1,501.4ZM672.9,492.1 672.5,515.7 690,504.6 684.6,497.1ZM672.5,515.7 707,528.6 690,504.6ZM707,528.6 707.8,506.9 695.1,501.4 690,504.6ZM707,528.6 672.5,515.7 671.8,549.4 705.7,562.8ZM646.7,479.4 655.9,492.4 663.4,487.4ZM639.4,475.8 639.5,503.5 655.9,492.4 646.7,479.4ZM639.5,503.5 672.5,515.7 655.9,492.4ZM672.5,515.7 672.9,492.1 663.4,487.4 655.9,492.4ZM607.3,455.3 607.3,457.9 609.5,456.3ZM607.3,457.9 618.6,461.9 609.5,456.3ZM618.6,461.9 607.3,457.9 623.4,480.7 634.5,472.6ZM607.3,457.9 607.9,491.8 623.4,480.7ZM607.9,491.8 639.5,503.5 623.4,480.7ZM639.5,503.5 639.4,475.8 634.5,472.6 623.4,480.7ZM607.3,457.9 576.6,447.3 577.7,480.6 607.9,491.8ZM543.4,358.6 543.8,368 551.1,361ZM543.8,368 574.2,377 566.4,365.8 551.1,361ZM574.2,377 573.9,368.2 566.4,365.8ZM574.2,377 543.8,368 545.6,403.1 575.4,412.8ZM575.4,412.8 545.6,403.1 547.2,437.1 576.6,447.3ZM514.1,348.4 514.8,359.4 522.6,351.3ZM514.8,359.4 543.8,368 535.3,355.8 522.6,351.3ZM543.8,368 543.4,358.6 535.3,355.8ZM543.8,368 514.8,359.4 517,393.9 545.6,403.1ZM545.6,403.1 517,393.9 519.1,427.3 547.2,437.1ZM485.9,338.5 486.9,351.1 495.5,341.8ZM486.9,351.1 514.8,359.4 504.8,345.2 495.5,341.8ZM514.8,359.4 514.1,348.4 504.8,345.2ZM514.8,359.4 486.9,351.1 489.6,385.1 517,393.9ZM459,329.3 460.3,343.2 469.4,332.8ZM460.3,343.2 486.9,351.1 475.6,335 469.4,332.8ZM486.9,351.1 485.9,338.5 475.6,335ZM486.9,351.1 460.3,343.2 463.3,376.6 489.6,385.1ZM433.2,320.8 434.7,335.7 444.1,324.4ZM434.7,335.7 460.3,343.2 448,325.7 444.1,324.4ZM460.3,343.2 459,329.3 448,325.7ZM460.3,343.2 434.7,335.7 438.1,368.5 463.3,376.6ZM408.4,313.2 410.2,328.4 419.4,316.6ZM410.2,328.4 434.7,335.7 422,317.4 419.4,316.6ZM434.7,335.7 433.2,320.8 422,317.4ZM434.7,335.7 410.2,328.4 413.9,360.7 438.1,368.5ZM384.7,306.3 386.6,321.4 395.5,309.4ZM386.6,321.4 410.2,328.4 397.3,310 395.5,309.4ZM410.2,328.4 408.4,313.2 397.3,310ZM410.2,328.4 386.6,321.4 390.6,353.2 413.9,360.7Z"/>
<path fill="#00b261" d="M757,508.9 754.5,514.7 752.7,512.9ZM764.7,501.5 763.2,523 754.5,514.7 757,508.9ZM763.2,523 743.3,542.1 754.5,514.7ZM743.3,542.1 744.5,520.7 752.7,512.9 754.5,514.7ZM743.3,542.1 763.2,523 760.9,557 741.3,576.8ZM777.3,488.5 774,496.8 771.7,494.3ZM783.7,481.9 781.8,505.3 774,496.8 777.3,488.5ZM781.8,505.3 763.2,523 774,496.8ZM763.2,523 764.7,501.5 771.7,494.3 774,496.8ZM763.2,523 781.8,505.3 779.2,538.5 760.9,557ZM797.8,466 792.1,480 788.8,476ZM801.6,461.6 799.3,488.6 792.1,480 797.8,466ZM799.3,488.6 781.8,505.3 792.1,480ZM781.8,505.3 783.7,481.9 788.8,476 792.1,480ZM819,437.6 818.8,440.1 817.9,438.8ZM818.8,440.1 813,445.3 817.9,438.8ZM813,445.3 818.8,440.1 809.1,464.2 804.3,457.8ZM818.8,440.1 815.7,473 809.1,464.2ZM815.7,473 799.3,488.6 809.1,464.2ZM799.3,488.6 801.6,461.6 804.3,457.8 809.1,464.2ZM818.8,440.1 834.4,426.2 831.1,458.3 815.7,473ZM857.3,338 856.3,347 853.5,341ZM856.3,347 841.4,358.5 846,347.1 853.5,341ZM841.4,358.5 842.2,350.1 846,347.1ZM841.4,358.5 856.3,347 852.6,380.6 837.8,392.9ZM837.8,392.9 852.6,380.6 849,413.1 834.4,426.2ZM871.6,325.7 870.4,336.1 867.4,329.2ZM870.4,336.1 856.3,347 861.3,334.6 867.4,329.2ZM856.3,347 857.3,338 861.3,334.6ZM856.3,347 870.4,336.1 866.6,368.9 852.6,380.6ZM852.6,380.6 866.6,368.9 862.9,400.7 849,413.1ZM885.1,314 883.6,325.9 880.5,317.9ZM883.6,325.9 870.4,336.1 876.1,321.9 880.5,317.9ZM870.4,336.1 871.6,325.7 876.1,321.9ZM870.4,336.1 883.6,325.9 879.7,357.9 866.6,368.9ZM897.9,303.2 896.2,316.2 893,307.3ZM896.2,316.2 883.6,325.9 890,309.8 893,307.3ZM883.6,325.9 885.1,314 890,309.8ZM883.6,325.9 896.2,316.2 892.2,347.6 879.7,357.9ZM909.9,293.3 908,307.1 904.8,297.4ZM908,307.1 896.2,316.2 903,299 904.8,297.4ZM896.2,316.2 897.9,303.2 903,299ZM896.2,316.2 908,307.1 903.9,337.7 892.2,347.6ZM921.2,284.4 919.2,298.4 916.2,288.4ZM919.2,298.4 908,307.1 915,289.3 916.2,288.4ZM908,307.1 909.9,293.3 915,289.3ZM908,307.1 919.2,298.4 915.1,328.4 903.9,337.7ZM931.9,276.3 929.9,290.2 927,280ZM929.9,290.2 919.2,298.4 926.2,280.6 927,280ZM919.2,298.4 921.2,284.4 926.2,280.6ZM919.2,298.4 929.9,290.2 925.7,319.6 915.1,328.4Z"/>
<path fill="#00961b" d="M708.1,530 724.1,552.6 741.2,543.2ZM707,529.6 705.7,562.8 724.1,552.6 708.1,530ZM705.7,562.8 741.3,576.8 724.1,552.6ZM741.3,576.8 743.2,544 741.2,543.2 724.1,552.6ZM672.5,514.2 672.5,515.7 673.9,514.8ZM672.5,515.7 694.2,523.8 673.9,514.8ZM694.2,523.8 672.5,515.7 689.1,539.2 706,529.2ZM672.5,515.7 671.8,549.4 689.1,539.2ZM671.8,549.4 705.7,562.8 689.1,539.2ZM705.7,562.8 707,529.6 706,529.2 689.1,539.2ZM639.5,497.1 639.5,503.5 644.9,499.8ZM639.5,503.5 672.5,515.7 670.7,513.3 644.9,499.8ZM672.5,515.7 672.5,514.2 670.7,513.3ZM672.5,515.7 639.5,503.5 639.5,536.6 671.8,549.4ZM607.6,476.2 607.9,491.8 619,483.8ZM607.9,491.8 639.5,503.5 631.1,491.6 619,483.8ZM639.5,503.5 639.5,497.1 631.1,491.6ZM639.5,503.5 607.9,491.8 608.5,524.4 639.5,536.6ZM586.2,450.6 576.6,447.3 592.2,469.5 596.8,466ZM576.6,447.3 577.7,480.6 592.2,469.5ZM577.7,480.6 607.9,491.8 592.2,469.5ZM607.9,491.8 607.6,476.2 596.8,466 592.2,469.5ZM607.9,491.8 577.7,480.6 578.8,512.7 608.5,524.4ZM547,405.3 561.1,425.2 572.5,415.3ZM545.6,404.4 547.2,437.1 561.1,425.2 547,405.3ZM547.2,437.1 576.6,447.3 561.1,425.2ZM576.6,447.3 575.6,417.8 572.5,415.3 561.1,425.2ZM576.6,447.3 547.2,437.1 548.9,469.8 577.7,480.6ZM516.7,390.5 517,393.9 519.4,391.6ZM517,393.9 538.4,400.9 519.4,391.6ZM538.4,400.9 517,393.9 532.1,415.5 544.7,403.9ZM517,393.9 519.1,427.3 532.1,415.5ZM519.1,427.3 547.2,437.1 532.1,415.5ZM547.2,437.1 545.6,404.4 544.7,403.9 532.1,415.5ZM547.2,437.1 519.1,427.3 521.2,459.5 548.9,469.8ZM489.1,378.4 489.6,385.1 494.1,380.5ZM489.6,385.1 517,393.9 513.6,389.1 494.1,380.5ZM517,393.9 516.7,390.5 513.6,389.1ZM517,393.9 489.6,385.1 492.1,417.9 519.1,427.3ZM519.1,427.3 492.1,417.9 494.6,449.7 521.2,459.5ZM462.5,367.8 463.3,376.6 469.1,370.4ZM463.3,376.6 489.6,385.1 483.3,376.1 469.1,370.4ZM489.6,385.1 489.1,378.4 483.3,376.1ZM489.6,385.1 463.3,376.6 466.3,408.9 492.1,417.9ZM437.1,358.3 438.1,368.5 444.6,361.1ZM438.1,368.5 463.3,376.6 455.3,365.1 444.6,361.1ZM463.3,376.6 462.5,367.8 455.3,365.1ZM463.3,376.6 438.1,368.5 441.4,400.3 466.3,408.9ZM412.6,349.8 413.9,360.7 420.6,352.6ZM413.9,360.7 438.1,368.5 429.1,355.6 420.6,352.6ZM438.1,368.5 437.1,358.3 429.1,355.6ZM438.1,368.5 413.9,360.7 417.5,392 441.4,400.3ZM389.3,342.2 390.6,353.2 397.2,344.8ZM390.6,353.2 413.9,360.7 404.5,347.2 397.2,344.8ZM413.9,360.7 412.6,349.8 404.5,347.2ZM413.9,360.7 390.6,353.2 394.6,384 417.5,392Z"/>
<path fill="#00b220" d="M762.6,524.6 752.3,549.7 744.3,542.9ZM763.1,524.1 760.9,557 752.3,549.7 762.6,524.6ZM760.9,557 741.3,576.8 752.3,549.7ZM741.3,576.8 743.2,544 744.3,542.9 752.3,549.7ZM782,503.7 781.8,505.3 781.2,504.6ZM781.8,505.3 770.2,516.4 781.2,504.6ZM770.2,516.4 781.8,505.3 771.4,530.9 763.7,523.5ZM781.8,505.3 779.2,538.5 771.4,530.9ZM779.2,538.5 760.9,557 771.4,530.9ZM760.9,557 763.1,524.1 763.7,523.5 771.4,530.9ZM799.8,482.4 799.3,488.6 796.9,485.8ZM799.3,488.6 781.8,505.3 782.9,502.6 796.9,485.8ZM781.8,505.3 782,503.7 782.9,502.6ZM781.8,505.3 799.3,488.6 796.5,521.1 779.2,538.5ZM817.1,457.9 815.7,473 811,466.7ZM815.7,473 799.3,488.6 804.4,475.9 811,466.7ZM799.3,488.6 799.8,482.4 804.4,475.9ZM799.3,488.6 815.7,473 812.6,504.7 796.5,521.1ZM829.5,430.5 834.4,426.2 825.1,449.5 823.2,446.7ZM834.4,426.2 831.1,458.3 825.1,449.5ZM831.1,458.3 815.7,473 825.1,449.5ZM815.7,473 817.1,457.9 823.2,446.7 825.1,449.5ZM815.7,473 831.1,458.3 827.9,489.4 812.6,504.7ZM851.7,382.7 843.6,403.2 839,395ZM852.5,381.8 849,413.1 843.6,403.2 851.7,382.7ZM849,413.1 834.4,426.2 843.6,403.2ZM834.4,426.2 837.3,397.8 839,395 843.6,403.2ZM834.4,426.2 849,413.1 845.6,444.5 831.1,458.3ZM866.9,365.6 866.6,368.9 865.6,367ZM866.6,368.9 856.1,377.7 865.6,367ZM856.1,377.7 866.6,368.9 857.9,390.9 852.9,381.2ZM866.6,368.9 862.9,400.7 857.9,390.9ZM862.9,400.7 849,413.1 857.9,390.9ZM849,413.1 852.5,381.8 852.9,381.2 857.9,390.9ZM849,413.1 862.9,400.7 859.3,431.4 845.6,444.5ZM880.5,351.6 879.7,357.9 878.1,354.1ZM879.7,357.9 866.6,368.9 868.5,364.1 878.1,354.1ZM866.6,368.9 866.9,365.6 868.5,364.1ZM866.6,368.9 879.7,357.9 875.9,389 862.9,400.7ZM862.9,400.7 875.9,389 872.2,419.1 859.3,431.4ZM893.2,339.3 892.2,347.6 890.1,342.3ZM892.2,347.6 879.7,357.9 883.3,349 890.1,342.3ZM879.7,357.9 880.5,351.6 883.3,349ZM879.7,357.9 892.2,347.6 888.3,377.9 875.9,389ZM905.2,328.2 903.9,337.7 901.7,331.5ZM903.9,337.7 892.2,347.6 896.6,336.1 901.7,331.5ZM892.2,347.6 893.2,339.3 896.6,336.1ZM892.2,347.6 903.9,337.7 900,367.4 888.3,377.9ZM916.5,318.3 915.1,328.4 912.8,321.5ZM915.1,328.4 903.9,337.7 908.9,325 912.8,321.5ZM903.9,337.7 905.2,328.2 908.9,325ZM903.9,337.7 915.1,328.4 911.1,357.5 900,367.4ZM927.1,309.4 925.7,319.6 923.5,312.5ZM925.7,319.6 915.1,328.4 920.2,315.2 923.5,312.5ZM915.1,328.4 916.5,318.3 920.2,315.2ZM915.1,328.4 925.7,319.6 921.6,348.1 911.1,357.5Z"/>
<path fill="#1b9600" d="M706.1,553.8 705.7,562.8 715.2,557.6ZM705.7,562.8 741.3,576.8 732.8,564.8 715.2,557.6ZM741.3,576.8 741.7,568.5 732.8,564.8ZM741.3,576.8 705.7,562.8 704.5,595.7 739.3,610.2ZM672.1,538 671.8,549.4 682.7,543ZM671.8,549.4 705.7,562.8 696.1,549.2 682.7,543ZM705.7,562.8 706.1,553.8 696.1,549.2ZM705.7,562.8 671.8,549.4 671.3,581.8 704.5,595.7ZM639.5,520.4 639.5,536.6 653.2,527.9ZM639.5,536.6 671.8,549.4 658.7,530.8 653.2,527.9ZM671.8,549.4 672.1,538 658.7,530.8ZM671.8,549.4 639.5,536.6 639.5,568.5 671.3,581.8ZM617.9,506 623.7,514.1 626.6,512.2ZM608,499.4 608.5,524.4 623.7,514.1 617.9,506ZM608.5,524.4 639.5,536.6 623.7,514.1ZM639.5,536.6 639.5,520.4 626.6,512.2 623.7,514.1ZM639.5,536.6 608.5,524.4 609,555.8 639.5,568.5ZM577.5,473.3 577.7,480.6 580.8,478.2ZM577.7,480.6 589.2,484.8 580.8,478.2ZM589.2,484.8 577.7,480.6 593.1,502.4 602.6,495.6ZM577.7,480.6 578.8,512.7 593.1,502.4ZM578.8,512.7 608.5,524.4 593.1,502.4ZM608.5,524.4 608,499.4 602.6,495.6 593.1,502.4ZM608.5,524.4 578.8,512.7 579.9,543.7 609,555.8ZM547.7,447.4 548.9,469.8 561.7,459.4ZM548.9,469.8 577.7,480.6 564.8,462.1 561.7,459.4ZM577.7,480.6 577.5,473.3 564.8,462.1ZM577.7,480.6 548.9,469.8 550.4,501.4 578.8,512.7ZM522.5,432.2 533.9,448.5 540.5,442.9ZM519.3,430.2 521.2,459.5 533.9,448.5 522.5,432.2ZM521.2,459.5 548.9,469.8 533.9,448.5ZM548.9,469.8 547.7,447.4 540.5,442.9 533.9,448.5ZM548.9,469.8 521.2,459.5 523.2,490.7 550.4,501.4ZM492,416.2 492.1,417.9 493.2,416.9ZM492.1,417.9 502,421.4 493.2,416.9ZM502,421.4 492.1,417.9 506.6,438.7 517.2,429.1ZM492.1,417.9 494.6,449.7 506.6,438.7ZM494.6,449.7 521.2,459.5 506.6,438.7ZM521.2,459.5 519.3,430.2 517.2,429.1 506.6,438.7ZM521.2,459.5 494.6,449.7 497,480.4 523.2,490.7ZM465.8,404.4 466.3,408.9 469.3,405.9ZM466.3,408.9 492.1,417.9 490.5,415.6 469.3,405.9ZM492.1,417.9 492,416.2 490.5,415.6ZM492.1,417.9 466.3,408.9 469.1,440.2 494.6,449.7ZM494.6,449.7 469.1,440.2 471.9,470.4 497,480.4ZM440.7,394 441.4,400.3 445.5,395.9ZM441.4,400.3 466.3,408.9 461.9,402.8 445.5,395.9ZM466.3,408.9 465.8,404.4 461.9,402.8ZM466.3,408.9 441.4,400.3 444.6,431.1 469.1,440.2ZM416.7,384.7 417.5,392 422.1,386.8ZM417.5,392 441.4,400.3 435.6,392 422.1,386.8ZM441.4,400.3 440.7,394 435.6,392ZM441.4,400.3 417.5,392 421,422.3 444.6,431.1ZM393.6,376.6 394.6,384 399.1,378.5ZM394.6,384 417.5,392 411.1,382.8 399.1,378.5ZM417.5,392 416.7,384.7 411.1,382.8ZM417.5,392 394.6,384 398.4,413.9 421,422.3Z"/>
<path fill="#20b200" d="M761.5,548.1 760.9,557 756.5,553.3ZM760.9,557 741.3,576.8 746.7,563.4 756.5,553.3ZM741.3,576.8 741.7,568.5 746.7,563.4ZM741.3,576.8 760.9,557 758.6,589.7 739.3,610.2ZM780.1,527.2 779.2,538.5 774.3,533.7ZM779.2,538.5 760.9,557 767,541.9 774.3,533.7ZM760.9,557 761.5,548.1 767,541.9ZM760.9,557 779.2,538.5 776.7,570.4 758.6,589.7ZM797.8,505.2 796.5,521.1 790.4,514.5ZM796.5,521.1 779.2,538.5 787.4,518.1 790.4,514.5ZM779.2,538.5 780.1,527.2 787.4,518.1ZM779.2,538.5 796.5,521.1 793.7,552.4 776.7,570.4ZM809.6,488.2 806.1,496.9 804.9,495.4ZM815,480.4 812.6,504.7 806.1,496.9 809.6,488.2ZM812.6,504.7 796.5,521.1 806.1,496.9ZM796.5,521.1 797.8,505.2 804.9,495.4 806.1,496.9ZM796.5,521.1 812.6,504.7 809.7,535.4 793.7,552.4ZM831.8,451.3 831.1,458.3 829.8,456.4ZM831.1,458.3 825.3,463.9 829.8,456.4ZM825.3,463.9 831.1,458.3 821.9,481.4 817.9,476ZM831.1,458.3 827.9,489.4 821.9,481.4ZM827.9,489.4 812.6,504.7 821.9,481.4ZM812.6,504.7 815,480.4 817.9,476 821.9,481.4ZM812.6,504.7 827.9,489.4 824.8,519.4 809.7,535.4ZM847.9,423 845.6,444.5 840.4,436ZM845.6,444.5 831.1,458.3 838.7,439 840.4,436ZM831.1,458.3 831.8,451.3 838.7,439ZM831.1,458.3 845.6,444.5 842.2,474.9 827.9,489.4ZM860.9,405.6 854.3,422.4 851.7,417.8ZM862.5,403.4 859.3,431.4 854.3,422.4 860.9,405.6ZM859.3,431.4 845.6,444.5 854.3,422.4ZM845.6,444.5 847.9,423 851.7,417.8 854.3,422.4ZM845.6,444.5 859.3,431.4 855.8,461.2 842.2,474.9ZM876.1,387.4 875.9,389 875.5,388.1ZM875.9,389 871.1,393.3 875.5,388.1ZM871.1,393.3 875.9,389 867.6,410.1 863.6,402.1ZM875.9,389 872.2,419.1 867.6,410.1ZM872.2,419.1 859.3,431.4 867.6,410.1ZM859.3,431.4 862.5,403.4 863.6,402.1 867.6,410.1ZM859.3,431.4 872.2,419.1 868.7,448.2 855.8,461.2ZM888.8,373.6 888.3,377.9 887.2,375.4ZM888.3,377.9 875.9,389 876.8,386.6 887.2,375.4ZM875.9,389 876.1,387.4 876.8,386.6ZM875.9,389 888.3,377.9 884.5,407.4 872.2,419.1ZM872.2,419.1 884.5,407.4 880.8,435.9 868.7,448.2ZM900.8,361.5 900,367.4 898.5,363.8ZM900,367.4 888.3,377.9 890.7,371.7 898.5,363.8ZM888.3,377.9 888.8,373.6 890.7,371.7ZM888.3,377.9 900,367.4 896.1,396.3 884.5,407.4ZM912,350.7 911.1,357.5 909.5,353.1ZM911.1,357.5 900,367.4 903.2,359.2 909.5,353.1ZM900,367.4 900.8,361.5 903.2,359.2ZM900,367.4 911.1,357.5 907.2,385.8 896.1,396.3ZM922.6,341.1 921.6,348.1 920.1,343.4ZM921.6,348.1 911.1,357.5 914.6,348.4 920.1,343.4ZM911.1,357.5 912,350.7 914.6,348.4ZM911.1,357.5 921.6,348.1 917.6,375.7 907.2,385.8Z"/>
<path fill="#529600" d="M722.5,586.4 722.5,586.4 722.5,586.4ZM705.1,578.9 704.5,595.7 722.5,586.4 722.5,586.4ZM704.5,595.7 739.3,610.2 722.5,586.4ZM739.3,610.2 740.2,594.1 722.5,586.4 722.5,586.4ZM739.3,610.2 704.5,595.7 703.3,627.3 737.4,642.3ZM686.3,569.8 688.1,572.5 689.8,571.5ZM671.6,562.7 671.3,581.8 688.1,572.5 686.3,569.8ZM671.3,581.8 704.5,595.7 688.1,572.5ZM704.5,595.7 705.1,578.9 689.8,571.5 688.1,572.5ZM704.5,595.7 671.3,581.8 670.7,613 703.3,627.3ZM649.2,550.4 655.3,559.1 659.9,556.4ZM639.5,545.1 639.5,568.5 655.3,559.1 649.2,550.4ZM639.5,568.5 671.3,581.8 655.3,559.1ZM671.3,581.8 671.6,562.7 659.9,556.4 655.3,559.1ZM671.3,581.8 639.5,568.5 639.5,599.3 670.7,613ZM610.3,527 623.9,546.4 632.5,541ZM608.5,525.9 609,555.8 623.9,546.4 610.3,527ZM609,555.8 639.5,568.5 623.9,546.4ZM639.5,568.5 639.5,545.1 632.5,541 623.9,546.4ZM639.5,568.5 609,555.8 609.6,586.2 639.5,599.3ZM578.6,505.4 578.8,512.7 583.6,509.2ZM578.8,512.7 603,522.2 583.6,509.2ZM603,522.2 578.8,512.7 593.9,534.2 607.3,525.1ZM578.8,512.7 579.9,543.7 593.9,534.2ZM579.9,543.7 609,555.8 593.9,534.2ZM609,555.8 608.5,525.9 607.3,525.1 593.9,534.2ZM549.6,484.3 550.4,501.4 561.2,493.2ZM550.4,501.4 578.8,512.7 568.8,498.3 561.2,493.2ZM578.8,512.7 578.6,505.4 568.8,498.3ZM578.8,512.7 550.4,501.4 551.9,532 579.9,543.7ZM529.4,471.4 535.8,480.4 539.2,477.7ZM521.6,466.4 523.2,490.7 535.8,480.4 529.4,471.4ZM523.2,490.7 550.4,501.4 535.8,480.4ZM550.4,501.4 549.6,484.3 539.2,477.7 535.8,480.4ZM550.4,501.4 523.2,490.7 525.1,520.8 551.9,532ZM496.7,452.6 508.9,470.1 516.5,463.6ZM494.7,451.6 497,480.4 508.9,470.1 496.7,452.6ZM497,480.4 523.2,490.7 508.9,470.1ZM523.2,490.7 521.6,466.4 516.5,463.6 508.9,470.1ZM523.2,490.7 497,480.4 499.3,510 525.1,520.8ZM469,438.9 469.1,440.2 470,439.3ZM469.1,440.2 479.4,444 470,439.3ZM479.4,444 469.1,440.2 483,460.2 493.3,450.9ZM469.1,440.2 471.9,470.4 483,460.2ZM471.9,470.4 497,480.4 483,460.2ZM497,480.4 494.7,451.6 493.3,450.9 483,460.2ZM497,480.4 471.9,470.4 474.5,499.7 499.3,510ZM444.2,427.7 444.6,431.1 446.8,428.9ZM444.6,431.1 469.1,440.2 467.8,438.4 446.8,428.9ZM469.1,440.2 469,438.9 467.8,438.4ZM469.1,440.2 444.6,431.1 447.7,460.9 471.9,470.4ZM471.9,470.4 447.7,460.9 450.7,489.8 474.5,499.7ZM420.5,417.9 421,422.3 423.9,419.3ZM421,422.3 444.6,431.1 441.5,426.6 423.9,419.3ZM444.6,431.1 444.2,427.7 441.5,426.6ZM444.6,431.1 421,422.3 424.4,451.7 447.7,460.9ZM397.8,409.2 398.4,413.9 401.3,410.5ZM398.4,413.9 421,422.3 417.1,416.6 401.3,410.5ZM421,422.3 420.5,417.9 417.1,416.6ZM421,422.3 398.4,413.9 402,442.9 424.4,451.7Z"/>
<path fill="#61b200" d="M750.2,583.4 750.2,583.4 750.2,583.4ZM759.8,573 758.6,589.7 750.2,583.4 750.2,583.4ZM758.6,589.7 739.3,610.2 750.2,583.4ZM739.3,610.2 740.2,594.1 750.2,583.4 750.2,583.4ZM739.3,610.2 758.6,589.7 756.5,621.1 737.4,642.3ZM770.2,560.9 769,563.9 768.2,563.2ZM778.2,551.6 776.7,570.4 769,563.9 770.2,560.9ZM776.7,570.4 758.6,589.7 769,563.9ZM758.6,589.7 759.8,573 768.2,563.2 769,563.9ZM758.6,589.7 776.7,570.4 774.3,601.3 756.5,621.1ZM790.5,536 786.7,545.6 784.6,543.6ZM795.7,529.4 793.7,552.4 786.7,545.6 790.5,536ZM793.7,552.4 776.7,570.4 786.7,545.6ZM776.7,570.4 778.2,551.6 784.6,543.6 786.7,545.6ZM776.7,570.4 793.7,552.4 791.1,582.6 774.3,601.3ZM811.5,507.5 803.2,528.4 799.5,524.4ZM812.5,506.2 809.7,535.4 803.2,528.4 811.5,507.5ZM809.7,535.4 793.7,552.4 803.2,528.4ZM793.7,552.4 795.7,529.4 799.5,524.4 803.2,528.4ZM793.7,552.4 809.7,535.4 806.9,565 791.1,582.6ZM828.6,482.3 827.9,489.4 825.9,486.7ZM827.9,489.4 815.4,501.9 825.9,486.7ZM815.4,501.9 827.9,489.4 818.8,512.2 813.1,505.3ZM827.9,489.4 824.8,519.4 818.8,512.2ZM824.8,519.4 809.7,535.4 818.8,512.2ZM809.7,535.4 812.5,506.2 813.1,505.3 818.8,512.2ZM844.1,458.4 842.2,474.9 837.8,468.4ZM842.2,474.9 827.9,489.4 833.8,474.3 837.8,468.4ZM827.9,489.4 828.6,482.3 833.8,474.3ZM827.9,489.4 842.2,474.9 839,504.3 824.8,519.4ZM854.5,443.6 850.8,453 849.4,450.8ZM858.5,437.9 855.8,461.2 850.8,453 854.5,443.6ZM855.8,461.2 842.2,474.9 850.8,453ZM842.2,474.9 844.1,458.4 849.4,450.8 850.8,453ZM842.2,474.9 855.8,461.2 852.5,490 839,504.3ZM871,422.1 864.1,440 861.1,434.7ZM872,420.9 868.7,448.2 864.1,440 871,422.1ZM868.7,448.2 855.8,461.2 864.1,440ZM855.8,461.2 858.5,437.9 861.1,434.7 864.1,440ZM855.8,461.2 868.7,448.2 865.2,476.5 852.5,490ZM884.6,406.1 884.5,407.4 884.2,406.7ZM884.5,407.4 879.6,412.1 884.2,406.7ZM879.6,412.1 884.5,407.4 876.6,427.7 872.7,420ZM884.5,407.4 880.8,435.9 876.6,427.7ZM880.8,435.9 868.7,448.2 876.6,427.7ZM868.7,448.2 872,420.9 872.7,420 876.6,427.7ZM868.7,448.2 880.8,435.9 877.3,463.6 865.2,476.5ZM896.5,393.1 896.1,396.3 895.3,394.4ZM896.1,396.3 884.5,407.4 885.2,405.5 895.3,394.4ZM884.5,407.4 884.6,406.1 885.2,405.5ZM884.5,407.4 896.1,396.3 892.4,424.3 880.8,435.9ZM880.8,435.9 892.4,424.3 888.7,451.5 877.3,463.6ZM907.7,381.6 907.2,385.8 906.2,383.2ZM907.2,385.8 896.1,396.3 897.8,391.8 906.2,383.2ZM896.1,396.3 896.5,393.1 897.8,391.8ZM896.1,396.3 907.2,385.8 903.3,413.2 892.4,424.3ZM918.3,371.4 917.6,375.7 916.6,373ZM917.6,375.7 907.2,385.8 909.3,380.1 916.6,373ZM907.2,385.8 907.7,381.6 909.3,380.1ZM907.2,385.8 917.6,375.7 913.8,402.7 903.3,413.2Z"/>
<path fill="#899600" d="M714.4,609.8 720.9,618.9 727.7,615.7ZM704.1,605.1 703.3,627.3 720.9,618.9 714.4,609.8ZM703.3,627.3 737.4,642.3 720.9,618.9ZM737.4,642.3 738.7,620.6 727.7,615.7 720.9,618.9ZM737.4,642.3 703.3,627.3 702.2,657.9 735.6,673.3ZM678.8,592.5 687.3,604.5 694.9,600.6ZM671.1,588.7 670.7,613 687.3,604.5 678.8,592.5ZM670.7,613 703.3,627.3 687.3,604.5ZM703.3,627.3 704.1,605.1 694.9,600.6 687.3,604.5ZM703.3,627.3 670.7,613 670.1,643.2 702.2,657.9ZM642.6,573 655,590.7 664.9,585.3ZM639.5,571.3 639.5,599.3 655,590.7 642.6,573ZM639.5,599.3 670.7,613 655,590.7ZM670.7,613 671.1,588.7 664.9,585.3 655,590.7ZM670.7,613 639.5,599.3 639.5,629.1 670.1,643.2ZM609,553.3 609,555.8 611.1,554.5ZM609,555.8 623.8,562 611.1,554.5ZM623.8,562 609,555.8 624.2,577.5 637.1,569.9ZM609,555.8 609.6,586.2 624.2,577.5ZM609.6,586.2 639.5,599.3 624.2,577.5ZM639.5,599.3 639.5,571.3 637.1,569.9 624.2,577.5ZM579.6,534.8 579.9,543.7 586.4,539.3ZM579.9,543.7 609,555.8 605.8,551.2 586.4,539.3ZM609,555.8 609,553.3 605.8,551.2ZM609,555.8 579.9,543.7 580.9,573.6 609.6,586.2ZM551.1,516.4 551.9,532 562.9,524.1ZM551.9,532 579.9,543.7 568.8,527.8 562.9,524.1ZM579.9,543.7 579.6,534.8 568.8,527.8ZM579.9,543.7 551.9,532 553.4,561.5 580.9,573.6ZM533.4,505.4 537.5,511.3 539.9,509.5ZM523.7,499.4 525.1,520.8 537.5,511.3 533.4,505.4ZM525.1,520.8 551.9,532 537.5,511.3ZM551.9,532 551.1,516.4 539.9,509.5 537.5,511.3ZM551.9,532 525.1,520.8 526.9,549.9 553.4,561.5ZM501.4,486.8 511,500.5 517,495.6ZM497.3,484.4 499.3,510 511,500.5 501.4,486.8ZM499.3,510 525.1,520.8 511,500.5ZM525.1,520.8 523.7,499.4 517,495.6 511,500.5ZM525.1,520.8 499.3,510 501.5,538.8 526.9,549.9ZM472.8,471.8 485.6,490.2 494.1,482.8ZM471.9,471.3 474.5,499.7 485.6,490.2 472.8,471.8ZM474.5,499.7 499.3,510 485.6,490.2ZM499.3,510 497.3,484.4 494.1,482.8 485.6,490.2ZM499.3,510 474.5,499.7 477.1,528.1 501.5,538.8ZM447.6,459.7 447.7,460.9 448.5,460.1ZM447.7,460.9 461.2,466.2 448.5,460.1ZM461.2,466.2 447.7,460.9 461.1,480.3 471.2,471ZM447.7,460.9 450.7,489.8 461.1,480.3ZM450.7,489.8 474.5,499.7 461.1,480.3ZM474.5,499.7 471.9,471.3 471.2,471 461.1,480.3ZM474.5,499.7 450.7,489.8 453.6,517.7 477.1,528.1ZM424.2,449.4 424.4,451.7 425.9,450.2ZM424.4,451.7 447.7,460.9 446.6,459.3 425.9,450.2ZM447.7,460.9 447.6,459.7 446.6,459.3ZM447.7,460.9 424.4,451.7 427.7,480.2 450.7,489.8ZM450.7,489.8 427.7,480.2 430.9,507.8 453.6,517.7ZM401.7,440.2 402,442.9 403.7,441ZM402,442.9 424.4,451.7 422.3,448.6 403.7,441ZM424.4,451.7 424.2,449.4 422.3,448.6ZM424.4,451.7 402,442.9 405.6,471 427.7,480.2Z"/>
<path fill="#a2b200" d="M752.3,605.5 748.1,615.8 744.9,613.7ZM758,599.1 756.5,621.1 748.1,615.8 752.3,605.5ZM756.5,621.1 737.4,642.3 748.1,615.8ZM737.4,642.3 738.7,620.6 744.9,613.7 748.1,615.8ZM737.4,642.3 756.5,621.1 754.4,651.5 735.6,673.3ZM772,582.3 766.7,595.6 763.1,593ZM776.2,577.3 774.3,601.3 766.7,595.6 772,582.3ZM774.3,601.3 756.5,621.1 766.7,595.6ZM756.5,621.1 758,599.1 763.1,593 766.7,595.6ZM756.5,621.1 774.3,601.3 772,631.1 754.4,651.5ZM791.8,557.3 784.1,576.7 779.6,572.9ZM793.5,555.1 791.1,582.6 784.1,576.7 791.8,557.3ZM791.1,582.6 774.3,601.3 784.1,576.7ZM774.3,601.3 776.2,577.3 779.6,572.9 784.1,576.7ZM774.3,601.3 791.1,582.6 788.5,611.8 772,631.1ZM809.9,532.9 809.7,535.4 808.8,534.5ZM809.7,535.4 802,543.6 808.8,534.5ZM802,543.6 809.7,535.4 800.5,558.9 794.8,553.4ZM809.7,535.4 806.9,565 800.5,558.9ZM806.9,565 791.1,582.6 800.5,558.9ZM791.1,582.6 793.5,555.1 794.8,553.4 800.5,558.9ZM825.7,510.8 824.8,519.4 822,516.1ZM824.8,519.4 809.7,535.4 811.7,530.4 822,516.1ZM809.7,535.4 809.9,532.9 811.7,530.4ZM809.7,535.4 824.8,519.4 821.8,548.5 806.9,565ZM840.7,489.3 839,504.3 834.5,498.2ZM839,504.3 824.8,519.4 831.4,502.6 834.5,498.2ZM824.8,519.4 825.7,510.8 831.4,502.6ZM824.8,519.4 839,504.3 835.9,532.8 821.8,548.5ZM849.9,476.4 847.5,482.6 846.5,481.2ZM854.8,469.5 852.5,490 847.5,482.6 849.9,476.4ZM852.5,490 839,504.3 847.5,482.6ZM839,504.3 840.7,489.3 846.5,481.2 847.5,482.6ZM839,504.3 852.5,490 849.2,518 835.9,532.8ZM866.1,454.8 860.6,469 858.2,465.1ZM868.2,452.1 865.2,476.5 860.6,469 866.1,454.8ZM865.2,476.5 852.5,490 860.6,469ZM852.5,490 854.8,469.5 858.2,465.1 860.6,469ZM852.5,490 865.2,476.5 861.8,503.9 849.2,518ZM880.3,437.3 873.1,456.1 869.7,450.2ZM880.7,436.8 877.3,463.6 873.1,456.1 880.3,437.3ZM877.3,463.6 865.2,476.5 873.1,456.1ZM865.2,476.5 868.2,452.1 869.7,450.2 873.1,456.1ZM865.2,476.5 877.3,463.6 873.8,490.6 861.8,503.9ZM892.5,423.2 892.4,424.3 892.1,423.7ZM892.4,424.3 885.9,430.8 892.1,423.7ZM885.9,430.8 892.4,424.3 884.9,443.9 881.1,436.4ZM892.4,424.3 888.7,451.5 884.9,443.9ZM888.7,451.5 877.3,463.6 884.9,443.9ZM877.3,463.6 880.7,436.8 881.1,436.4 884.9,443.9ZM877.3,463.6 888.7,451.5 885.2,477.9 873.8,490.6ZM903.6,411 903.3,413.2 902.8,411.9ZM903.3,413.2 892.4,424.3 893,422.7 902.8,411.9ZM892.4,424.3 892.5,423.2 893,422.7ZM892.4,424.3 903.3,413.2 899.7,439.9 888.7,451.5ZM888.7,451.5 899.7,439.9 896.1,465.8 885.2,477.9ZM914.1,400.2 913.8,402.7 913.2,401.2ZM913.8,402.7 903.3,413.2 904.5,410.1 913.2,401.2ZM903.3,413.2 903.6,411 904.5,410.1ZM903.3,413.2 913.8,402.7 910,428.8 899.7,439.9Z"/>
<path fill="#966d00" d="M709.1,635.5 719.4,650.3 730.3,645.5ZM703.1,632.8 702.2,657.9 719.4,650.3 709.1,635.5ZM702.2,657.9 735.6,673.3 719.4,650.3ZM735.6,673.3 737.1,648.6 730.3,645.5 719.4,650.3ZM674.1,617.8 686.4,635.4 697.7,630ZM670.6,616.1 670.1,643.2 686.4,635.4 674.1,617.8ZM670.1,643.2 702.2,657.9 686.4,635.4ZM702.2,657.9 703.1,632.8 697.7,630 686.4,635.4ZM639.5,598.8 639.5,599.3 640,599.1ZM639.5,599.3 644.5,601.5 640,599.1ZM644.5,601.5 639.5,599.3 654.8,621.2 667.8,614.5ZM639.5,599.3 639.5,629.1 654.8,621.2ZM639.5,629.1 670.1,643.2 654.8,621.2ZM670.1,643.2 670.6,616.1 667.8,614.5 654.8,621.2ZM609.5,581.3 609.6,586.2 613.7,583.8ZM609.6,586.2 639.5,599.3 638.8,598.4 613.7,583.8ZM639.5,599.3 639.5,598.8 638.8,598.4ZM639.5,599.3 609.6,586.2 610.1,615.5 639.5,629.1ZM580.6,563.6 580.9,573.6 588.7,568.7ZM580.9,573.6 609.6,586.2 603.6,577.6 588.7,568.7ZM609.6,586.2 609.5,581.3 603.6,577.6ZM609.6,586.2 580.9,573.6 581.9,602.6 610.1,615.5ZM552.6,546.3 553.4,561.5 564.7,553.9ZM553.4,561.5 580.9,573.6 568.9,556.4 564.7,553.9ZM580.9,573.6 580.6,563.6 568.9,556.4ZM580.9,573.6 553.4,561.5 554.8,590.1 581.9,602.6ZM535.7,536.1 539.2,541.1 541.4,539.6ZM525.7,530.1 526.9,549.9 539.2,541.1 535.7,536.1ZM526.9,549.9 553.4,561.5 539.2,541.1ZM553.4,561.5 552.6,546.3 541.4,539.6 539.2,541.1ZM553.4,561.5 526.9,549.9 528.7,578.2 554.8,590.1ZM505,518.2 513.1,530 518.4,525.9ZM499.7,515.2 501.5,538.8 513.1,530 505,518.2ZM501.5,538.8 526.9,549.9 513.1,530ZM526.9,549.9 525.7,530.1 518.4,525.9 513.1,530ZM526.9,549.9 501.5,538.8 503.7,566.6 528.7,578.2ZM476.8,503 488,519.2 495.6,513.1ZM474.7,501.9 477.1,528.1 488,519.2 476.8,503ZM477.1,528.1 501.5,538.8 488,519.2ZM501.5,538.8 499.7,515.2 495.6,513.1 488,519.2ZM501.5,538.8 477.1,528.1 479.6,555.6 503.7,566.6ZM450.9,490.1 463.9,508.9 473,501ZM450.7,490 453.6,517.7 463.9,508.9 450.9,490.1ZM453.6,517.7 477.1,528.1 463.9,508.9ZM477.1,528.1 474.7,501.9 473,501 463.9,508.9ZM477.1,528.1 453.6,517.7 456.4,544.9 479.6,555.6ZM427.6,479.3 427.7,480.2 428.3,479.6ZM427.7,480.2 446,487.8 428.3,479.6ZM446,487.8 427.7,480.2 440.6,498.9 450.5,489.9ZM427.7,480.2 430.9,507.8 440.6,498.9ZM430.9,507.8 453.6,517.7 440.6,498.9ZM453.6,517.7 450.7,490 450.5,489.9 440.6,498.9ZM453.6,517.7 430.9,507.8 434,534.6 456.4,544.9ZM405.4,469.7 405.6,471 406.4,470.1ZM405.6,471 427.7,480.2 426.9,478.9 406.4,470.1ZM427.7,480.2 427.6,479.3 426.9,478.9ZM427.7,480.2 405.6,471 409.1,498.2 430.9,507.8Z"/>
<path fill="#b28200" d="M752.8,630.4 746.1,647 740.9,644.2ZM756.1,626.5 754.4,651.5 746.1,647 752.8,630.4ZM754.4,651.5 735.6,673.3 746.1,647ZM735.6,673.3 737.1,648.6 740.9,644.2 746.1,647ZM772.2,606.6 764.4,626.2 759.1,622.8ZM774.1,604.3 772,631.1 764.4,626.2 772.2,606.6ZM772,631.1 754.4,651.5 764.4,626.2ZM754.4,651.5 756.1,626.5 759.1,622.8 764.4,626.2ZM791.1,582.1 791.1,582.6 790.9,582.4ZM791.1,582.6 788.4,585.6 790.9,582.4ZM788.4,585.6 791.1,582.6 781.6,606.7 775.6,602.3ZM791.1,582.6 788.5,611.8 781.6,606.7ZM788.5,611.8 772,631.1 781.6,606.7ZM772,631.1 774.1,604.3 775.6,602.3 781.6,606.7ZM807.3,560.2 806.9,565 805.1,563.3ZM806.9,565 791.1,582.6 791.5,581.6 805.1,563.3ZM791.1,582.6 791.1,582.1 791.5,581.6ZM791.1,582.6 806.9,565 804.1,593.7 788.5,611.8ZM822.8,538.7 821.8,548.5 818.5,544.9ZM821.8,548.5 806.9,565 810.5,555.8 818.5,544.9ZM806.9,565 807.3,560.2 810.5,555.8ZM806.9,565 821.8,548.5 818.9,576.6 804.1,593.7ZM837.5,518.1 835.9,532.8 831.1,527.1ZM835.9,532.8 821.8,548.5 828.9,530.1 831.1,527.1ZM821.8,548.5 822.8,538.7 828.9,530.1ZM821.8,548.5 835.9,532.8 832.8,560.4 818.9,576.6ZM846.2,506 844.2,511.3 843.3,510.1ZM851.4,498.9 849.2,518 844.2,511.3 846.2,506ZM849.2,518 835.9,532.8 844.2,511.3ZM835.9,532.8 837.5,518.1 843.3,510.1 844.2,511.3ZM835.9,532.8 849.2,518 846,545.1 832.8,560.4ZM861.9,484.9 857.2,497.1 855.1,494ZM864.6,481.4 861.8,503.9 857.2,497.1 861.9,484.9ZM861.8,503.9 849.2,518 857.2,497.1ZM849.2,518 851.4,498.9 855.1,494 857.2,497.1ZM849.2,518 861.8,503.9 858.6,530.5 846,545.1ZM876,467.1 869.6,483.7 866.6,478.8ZM877,465.7 873.8,490.6 869.6,483.7 876,467.1ZM873.8,490.6 861.8,503.9 869.6,483.7ZM861.8,503.9 864.6,481.4 866.6,478.8 869.6,483.7ZM861.8,503.9 873.8,490.6 870.5,516.7 858.6,530.5ZM888.6,451.8 881.3,470.9 877.9,464.7ZM888.7,451.7 885.2,477.9 881.3,470.9 888.6,451.8ZM885.2,477.9 873.8,490.6 881.3,470.9ZM873.8,490.6 877,465.7 877.9,464.7 881.3,470.9ZM873.8,490.6 885.2,477.9 881.8,503.6 870.5,516.7ZM899.8,439 899.7,439.9 899.4,439.4ZM899.7,439.9 891,449.1 899.4,439.4ZM891,449.1 899.7,439.9 892.5,458.8 888.8,451.6ZM899.7,439.9 896.1,465.8 892.5,458.8ZM896.1,465.8 885.2,477.9 892.5,458.8ZM885.2,477.9 888.7,451.7 888.8,451.6 892.5,458.8ZM885.2,477.9 896.1,465.8 892.6,491 881.8,503.6ZM910.2,427.7 910,428.8 909.7,428.2ZM910,428.8 899.7,439.9 900.1,438.6 909.7,428.2ZM899.7,439.9 899.8,439 900.1,438.6ZM899.7,439.9 910,428.8 906.4,454.3 896.1,465.8Z"/>
<path fill="#963700" d="M639.5,627.4 639.5,629.1 641,628.3ZM639.5,629.1 654.7,636.1 641,628.3ZM610,609.8 610.1,615.5 615,612.8ZM610.1,615.5 639.5,629.1 637.5,626.2 615,612.8ZM639.5,629.1 639.5,627.4 637.5,626.2ZM581.5,592.2 581.9,602.6 590.3,597.6ZM581.9,602.6 610.1,615.5 603.1,605.5 590.3,597.6ZM610.1,615.5 610,609.8 603.1,605.5ZM554,575.2 554.8,590.1 566.3,582.8ZM554.8,590.1 581.9,602.6 569.5,584.8 566.3,582.8ZM581.9,602.6 581.5,592.2 569.5,584.8ZM537.5,565.2 540.8,570 543,568.5ZM527.5,559.2 528.7,578.2 540.8,570 537.5,565.2ZM528.7,578.2 554.8,590.1 540.8,570ZM554.8,590.1 554,575.2 543,568.5 540.8,570ZM507.7,547.7 515.1,558.4 520.1,554.9ZM502,544.4 503.7,566.6 515.1,558.4 507.7,547.7ZM503.7,566.6 528.7,578.2 515.1,558.4ZM528.7,578.2 527.5,559.2 520.1,554.9 515.1,558.4ZM480.1,532.4 490.4,547.3 497.5,541.9ZM477.4,530.9 479.6,555.6 490.4,547.3 480.1,532.4ZM479.6,555.6 503.7,566.6 490.4,547.3ZM503.7,566.6 502,544.4 497.5,541.9 490.4,547.3ZM454.5,519.1 466.6,536.6 475.1,529.7ZM453.7,518.7 456.4,544.9 466.6,536.6 454.5,519.1ZM456.4,544.9 479.6,555.6 466.6,536.6ZM479.6,555.6 477.4,530.9 475.1,529.7 466.6,536.6ZM430.9,507.7 430.9,507.8 431,507.7ZM430.9,507.8 433.5,509 431,507.7ZM433.5,509 430.9,507.8 443.6,526.3 452.9,518.3ZM430.9,507.8 434,534.6 443.6,526.3ZM434,534.6 456.4,544.9 443.6,526.3ZM456.4,544.9 453.7,518.7 452.9,518.3 443.6,526.3ZM409,497.7 409.1,498.2 409.4,497.9ZM409.1,498.2 430.9,507.8 430.8,507.6 409.4,497.9ZM430.9,507.8 430.9,507.7 430.8,507.6ZM430.9,507.8 409.1,498.2 412.4,524.7 434,534.6Z"/>
<path fill="#b24100" d="M788.7,610.2 788.5,611.8 787.8,611.3ZM788.5,611.8 780.3,621.4 787.8,611.3ZM804.7,588 804.1,593.7 802,591.8ZM804.1,593.7 788.5,611.8 789.8,608.7 802,591.8ZM788.5,611.8 788.7,610.2 789.8,608.7ZM819.9,566.5 818.9,576.6 815.3,573.1ZM818.9,576.6 804.1,593.7 808.4,582.8 815.3,573.1ZM804.1,593.7 804.7,588 808.4,582.8ZM834.4,546 832.8,560.4 828,555.1ZM832.8,560.4 818.9,576.6 826.3,557.5 828,555.1ZM818.9,576.6 819.9,566.5 826.3,557.5ZM843,534 841.1,539.1 840.2,538ZM848.2,526.8 846,545.1 841.1,539.1 843,534ZM846,545.1 832.8,560.4 841.1,539.1ZM832.8,560.4 834.4,546 840.2,538 841.1,539.1ZM858.3,513.2 854,524.4 852,521.7ZM861.2,509.2 858.6,530.5 854,524.4 858.3,513.2ZM858.6,530.5 846,545.1 854,524.4ZM846,545.1 848.2,526.8 852,521.7 854,524.4ZM872.1,495 866.2,510.4 863.4,506.3ZM873.5,493.3 870.5,516.7 866.2,510.4 872.1,495ZM870.5,516.7 858.6,530.5 866.2,510.4ZM858.6,530.5 861.2,509.2 863.4,506.3 866.2,510.4ZM884.7,479.3 877.9,497.2 874.6,491.8ZM885.1,478.8 881.8,503.6 877.9,497.2 884.7,479.3ZM881.8,503.6 870.5,516.7 877.9,497.2ZM870.5,516.7 873.5,493.3 874.6,491.8 877.9,497.2ZM896.1,465.7 896.1,465.8 896,465.7ZM896.1,465.8 894.8,467.2 896,465.7ZM894.8,467.2 896.1,465.8 889,484.6 885.5,478.3ZM896.1,465.8 892.6,491 889,484.6ZM892.6,491 881.8,503.6 889,484.6ZM881.8,503.6 885.1,478.8 885.5,478.3 889,484.6ZM906.5,453.9 906.4,454.3 906.3,454.1ZM906.4,454.3 896.1,465.8 896.1,465.6 906.3,454.1ZM896.1,465.8 896.1,465.7 896.1,465.6ZM896.1,465.8 906.4,454.3 902.8,479.1 892.6,491Z"/>
<path fill="#960000" d="M412.4,524.4 412.4,524.7 412.6,524.5ZM412.4,524.7 426.9,531.3 412.6,524.5Z"/>
<path fill="#b20000" d="M902.9,478.9 902.8,479.1 902.8,479ZM902.8,479.1 896,487.1 902.8,479Z"/>
<path fill="none" stroke="#000" stroke-opacity="0.40" stroke-width="1" d="M844.3,172.6 804.9,167.8 822.7,161.4 861.2,165.9ZM861.2,165.9 822.7,161.4 839.3,155.5 876.9,159.7ZM876.9,159.7 839.3,155.5 854.9,150 891.6,153.9ZM891.6,153.9 854.9,150 869.5,144.7 905.4,148.4ZM905.4,148.4 869.5,144.7 883.3,139.8 918.4,143.3ZM918.4,143.3 883.3,139.8 896.2,135.2 930.5,138.5ZM930.5,138.5 896.2,135.2 908.4,130.9 942,133.9ZM942,133.9 908.4,130.9 920,126.7 952.9,129.7ZM804.9,167.8 767.4,163.2 786,157.2 822.7,161.4ZM822.7,161.4 786,157.2 803.4,151.5 839.3,155.5ZM839.3,155.5 803.4,151.5 819.7,146.2 854.9,150ZM854.9,150 819.7,146.2 835.1,141.2 869.5,144.7ZM869.5,144.7 835.1,141.2 849.6,136.5 883.3,139.8ZM883.3,139.8 849.6,136.5 863.2,132.1 896.2,135.2ZM896.2,135.2 863.2,132.1 876.1,127.9 908.4,130.9ZM908.4,130.9 876.1,127.9 888.3,123.9 920,126.7ZM767.4,163.2 731.5,158.9 750.9,153.1 786,157.2ZM786,157.2 750.9,153.1 769,147.7 803.4,151.5ZM803.4,151.5 769,147.7 786.1,142.6 819.7,146.2ZM819.7,146.2 786.1,142.6 802.1,137.8 835.1,141.2ZM835.1,141.2 802.1,137.8 817.2,133.3 849.6,136.5ZM849.6,136.5 817.2,133.3 831.5,129 863.2,132.1ZM863.2,132.1 831.5,129 845,125 876.1,127.9ZM876.1,127.9 845,125 857.8,121.2 888.3,123.9ZM731.5,158.9 697.3,154.7 717.3,149.2 750.9,153.1ZM750.9,153.1 717.3,149.2 736.1,144 769,147.7ZM769,147.7 736.1,144 753.8,139.1 786.1,142.6ZM786.1,142.6 753.8,139.1 770.4,134.6 802.1,137.8ZM802.1,137.8 770.4,134.6 786.1,130.2 817.2,133.3ZM817.2,133.3 786.1,130.2 801,126.1 831.5,129ZM831.5,129 801,126.1 815.1,122.2 845,125ZM845,125 815.1,122.2 828.4,118.6 857.8,121.2ZM602.5,180.9 567.4,175.7 594.3,168.8 628.7,173.6ZM628.7,173.6 594.3,168.8 619.3,162.4 653.2,166.9ZM653.2,166.9 619.3,162.4 642.7,156.4 676,160.6ZM676,160.6 642.7,156.4 664.6,150.7 697.3,154.7ZM697.3,154.7 664.6,150.7 685.2,145.5 717.3,149.2ZM717.3,149.2 685.2,145.5 704.6,140.5 736.1,144ZM736.1,144 704.6,140.5 722.8,135.8 753.8,139.1ZM753.8,139.1 722.8,135.8 740,131.4 770.4,134.6ZM770.4,134.6 740,131.4 756.2,127.3 786.1,130.2ZM786.1,130.2 756.2,127.3 771.6,123.3 801,126.1ZM801,126.1 771.6,123.3 786.2,119.6 815.1,122.2ZM815.1,122.2 786.2,119.6 800,116 828.4,118.6ZM567.4,175.7 534.1,170.7 561.5,164.2 594.3,168.8ZM594.3,168.8 561.5,164.2 587,158 619.3,162.4ZM619.3,162.4 587,158 610.9,152.3 642.7,156.4ZM642.7,156.4 610.9,152.3 633.4,146.9 664.6,150.7ZM664.6,150.7 633.4,146.9 654.4,141.9 685.2,145.5ZM685.2,145.5 654.4,141.9 674.3,137.1 704.6,140.5ZM704.6,140.5 674.3,137.1 693,132.7 722.8,135.8ZM722.8,135.8 693,132.7 710.7,128.4 740,131.4ZM740,131.4 710.7,128.4 727.4,124.4 756.2,127.3ZM756.2,127.3 727.4,124.4 743.3,120.6 771.6,123.3ZM771.6,123.3 743.3,120.6 758.3,117 786.2,119.6ZM786.2,119.6 758.3,117 772.6,113.6 800,116ZM534.1,170.7 502.4,166 530.2,159.8 561.5,164.2ZM561.5,164.2 530.2,159.8 556.2,153.9 587,158ZM587,158 556.2,153.9 580.5,148.4 610.9,152.3ZM610.9,152.3 580.5,148.4 603.4,143.3 633.4,146.9ZM633.4,146.9 603.4,143.3 624.9,138.5 654.4,141.9ZM654.4,141.9 624.9,138.5 645.2,133.9 674.3,137.1ZM674.3,137.1 645.2,133.9 664.4,129.6 693,132.7ZM693,132.7 664.4,129.6 682.5,125.5 710.7,128.4ZM710.7,128.4 682.5,125.5 699.7,121.7 727.4,124.4ZM727.4,124.4 699.7,121.7 716,118 743.3,120.6ZM743.3,120.6 716,118 731.4,114.5 758.3,117ZM758.3,117 731.4,114.5 746.2,111.2 772.6,113.6ZM502.4,166 472.2,161.5 500.3,155.5 530.2,159.8ZM530.2,159.8 500.3,155.5 526.7,150 556.2,153.9ZM556.2,153.9 526.7,150 551.4,144.7 580.5,148.4ZM580.5,148.4 551.4,144.7 574.7,139.8 603.4,143.3ZM603.4,143.3 574.7,139.8 596.6,135.2 624.9,138.5ZM624.9,138.5 596.6,135.2 617.3,130.8 645.2,133.9ZM645.2,133.9 617.3,130.8 636.9,126.7 664.4,129.6ZM664.4,129.6 636.9,126.7 655.4,122.7 682.5,125.5ZM682.5,125.5 655.4,122.7 673,119 699.7,121.7ZM699.7,121.7 673,119 689.6,115.5 716,118ZM716,118 689.6,115.5 705.5,112.1 731.4,114.5ZM731.4,114.5 705.5,112.1 720.6,109 746.2,111.2ZM472.2,161.5 443.3,157.2 471.8,151.5 500.3,155.5ZM500.3,155.5 471.8,151.5 498.4,146.2 526.7,150ZM526.7,150 498.4,146.2 523.5,141.2 551.4,144.7ZM551.4,144.7 523.5,141.2 547.1,136.5 574.7,139.8ZM574.7,139.8 547.1,136.5 569.4,132 596.6,135.2ZM596.6,135.2 569.4,132 590.5,127.8 617.3,130.8ZM617.3,130.8 590.5,127.8 610.4,123.8 636.9,126.7ZM636.9,126.7 610.4,123.8 629.3,120.1 655.4,122.7ZM655.4,122.7 629.3,120.1 647.2,116.5 673,119ZM673,119 647.2,116.5 664.2,113.1 689.6,115.5ZM689.6,115.5 664.2,113.1 680.4,109.8 705.5,112.1ZM705.5,112.1 680.4,109.8 695.8,106.7 720.6,109ZM443.3,157.2 415.8,153.1 444.5,147.7 471.8,151.5ZM471.8,151.5 444.5,147.7 471.4,142.6 498.4,146.2ZM498.4,146.2 471.4,142.6 496.8,137.8 523.5,141.2ZM523.5,141.2 496.8,137.8 520.7,133.3 547.1,136.5ZM547.1,136.5 520.7,133.3 543.3,129 569.4,132ZM569.4,132 543.3,129 564.6,124.9 590.5,127.8ZM590.5,127.8 564.6,124.9 584.8,121.1 610.4,123.8ZM610.4,123.8 584.8,121.1 604,117.5 629.3,120.1ZM629.3,120.1 604,117.5 622.3,114 647.2,116.5ZM647.2,116.5 622.3,114 639.6,110.7 664.2,113.1ZM664.2,113.1 639.6,110.7 656.1,107.6 680.4,109.8ZM680.4,109.8 656.1,107.6 671.9,104.6 695.8,106.7ZM415.8,153.1 389.5,149.2 418.3,144 444.5,147.7ZM444.5,147.7 418.3,144 445.5,139.1 471.4,142.6ZM471.4,142.6 445.5,139.1 471.1,134.5 496.8,137.8ZM496.8,137.8 471.1,134.5 495.3,130.2 520.7,133.3ZM520.7,133.3 495.3,130.2 518.1,126.1 543.3,129ZM543.3,129 518.1,126.1 539.7,122.2 564.6,124.9ZM564.6,124.9 539.7,122.2 560.2,118.5 584.8,121.1ZM584.8,121.1 560.2,118.5 579.7,115 604,117.5ZM604,117.5 579.7,115 598.2,111.6 622.3,114ZM622.3,114 598.2,111.6 615.9,108.5 639.6,110.7ZM639.6,110.7 615.9,108.5 632.7,105.4 656.1,107.6ZM656.1,107.6 632.7,105.4 648.7,102.5 671.9,104.6ZM389.5,149.2 364.3,145.5 393.3,140.5 418.3,144ZM418.3,144 393.3,140.5 420.6,135.8 445.5,139.1ZM445.5,139.1 420.6,135.8 446.4,131.4 471.1,134.5ZM471.1,134.5 446.4,131.4 470.8,127.2 495.3,130.2ZM495.3,130.2 470.8,127.2 493.9,123.2 518.1,126.1ZM518.1,126.1 493.9,123.2 515.7,119.5 539.7,122.2ZM539.7,122.2 515.7,119.5 536.5,115.9 560.2,118.5ZM560.2,118.5 536.5,115.9 556.2,112.6 579.7,115ZM579.7,115 556.2,112.6 575,109.3 598.2,111.6ZM598.2,111.6 575,109.3 592.9,106.3 615.9,108.5ZM615.9,108.5 592.9,106.3 610,103.3 632.7,105.4ZM632.7,105.4 610,103.3 626.3,100.5 648.7,102.5ZM749.9,429 711.2,417.5 733,402.2 770.8,412.9ZM770.8,412.9 733,402.2 753.3,387.9 790.3,397.9ZM790.3,397.9 753.3,387.9 772.2,374.6 808.4,383.9ZM808.4,383.9 772.2,374.6 790,362 825.4,370.8ZM711.2,417.5 674.4,406.7 696.9,392.1 733,402.2ZM733,402.2 696.9,392.1 718,378.4 753.3,387.9ZM753.3,387.9 718,378.4 737.6,365.7 772.2,374.6ZM772.2,374.6 737.6,365.7 756.1,353.7 790,362ZM674.4,406.7 639.4,396.3 662.6,382.4 696.9,392.1ZM696.9,392.1 662.6,382.4 684.2,369.4 718,378.4ZM718,378.4 684.2,369.4 704.5,357.2 737.6,365.7ZM737.6,365.7 704.5,357.2 723.6,345.7 756.1,353.7ZM639.4,396.3 606.1,386.4 629.8,373.1 662.6,382.4ZM662.6,382.4 629.8,373.1 652,360.7 684.2,369.4ZM684.2,369.4 652,360.7 672.8,349 704.5,357.2ZM704.5,357.2 672.8,349 692.5,338 723.6,345.7ZM749.9,429 711.2,417.5 709.8,456.1 747.6,468.3ZM747.6,468.3 709.8,456.1 708.4,493 745.4,505.9ZM745.4,505.9 708.4,493 707,528.6 743.3,542.1ZM743.3,542.1 707,528.6 705.7,562.8 741.3,576.8ZM741.3,576.8 705.7,562.8 704.5,595.7 739.3,610.2ZM739.3,610.2 704.5,595.7 703.3,627.3 737.4,642.3ZM737.4,642.3 703.3,627.3 702.2,657.9 735.6,673.3ZM711.2,417.5 674.4,406.7 673.8,444.5 709.8,456.1ZM709.8,456.1 673.8,444.5 673.1,480.8 708.4,493ZM708.4,493 673.1,480.8 672.5,515.7 707,528.6ZM707,528.6 672.5,515.7 671.8,549.4 705.7,562.8ZM705.7,562.8 671.8,549.4 671.3,581.8 704.5,595.7ZM704.5,595.7 671.3,581.8 670.7,613 703.3,627.3ZM703.3,627.3 670.7,613 670.1,643.2 702.2,657.9ZM674.4,406.7 639.4,396.3 639.4,433.4 673.8,444.5ZM673.8,444.5 639.4,433.4 639.4,469.1 673.1,480.8ZM673.1,480.8 639.4,469.1 639.5,503.5 672.5,515.7ZM672.5,515.7 639.5,503.5 639.5,536.6 671.8,549.4ZM671.8,549.4 639.5,536.6 639.5,568.5 671.3,581.8ZM671.3,581.8 639.5,568.5 639.5,599.3 670.7,613ZM670.7,613 639.5,599.3 639.5,629.1 670.1,643.2ZM639.4,396.3 606.1,386.4 606.7,422.9 639.4,433.4ZM639.4,433.4 606.7,422.9 607.3,457.9 639.4,469.1ZM639.4,469.1 607.3,457.9 607.9,491.8 639.5,503.5ZM639.5,503.5 607.9,491.8 608.5,524.4 639.5,536.6ZM639.5,536.6 608.5,524.4 609,555.8 639.5,568.5ZM639.5,568.5 609,555.8 609.6,586.2 639.5,599.3ZM639.5,599.3 609.6,586.2 610.1,615.5 639.5,629.1ZM602.5,180.9 567.4,175.7 568.9,219.2 603.3,225.4ZM603.3,225.4 568.9,219.2 570.3,261 604,268.1ZM604,268.1 570.3,261 571.7,301.2 604.7,309.1ZM604.7,309.1 571.7,301.2 573,339.8 605.4,348.5ZM605.4,348.5 573,339.8 574.2,377 606.1,386.4ZM606.1,386.4 574.2,377 575.4,412.8 606.7,422.9ZM606.7,422.9 575.4,412.8 576.6,447.3 607.3,457.9ZM607.3,457.9 576.6,447.3 577.7,480.6 607.9,491.8ZM607.9,491.8 577.7,480.6 578.8,512.7 608.5,524.4ZM608.5,524.4 578.8,512.7 579.9,543.7 609,555.8ZM609,555.8 579.9,543.7 580.9,573.6 609.6,586.2ZM609.6,586.2 580.9,573.6 581.9,602.6 610.1,615.5ZM567.4,175.7 534.1,170.7 536.2,213.3 568.9,219.2ZM568.9,219.2 536.2,213.3 538.2,254.2 570.3,261ZM570.3,261 538.2,254.2 540.2,293.6 571.7,301.2ZM571.7,301.2 540.2,293.6 542,331.5 573,339.8ZM573,339.8 542,331.5 543.8,368 574.2,377ZM574.2,377 543.8,368 545.6,403.1 575.4,412.8ZM575.4,412.8 545.6,403.1 547.2,437.1 576.6,447.3ZM576.6,447.3 547.2,437.1 548.9,469.8 577.7,480.6ZM577.7,480.6 548.9,469.8 550.4,501.4 578.8,512.7ZM578.8,512.7 550.4,501.4 551.9,532 579.9,543.7ZM579.9,543.7 551.9,532 553.4,561.5 580.9,573.6ZM580.9,573.6 553.4,561.5 554.8,590.1 581.9,602.6ZM534.1,170.7 502.4,166 505.1,207.7 536.2,213.3ZM536.2,213.3 505.1,207.7 507.6,247.8 538.2,254.2ZM538.2,254.2 507.6,247.8 510.1,286.3 540.2,293.6ZM540.2,293.6 510.1,286.3 512.5,323.5 542,331.5ZM542,331.5 512.5,323.5 514.8,359.4 543.8,368ZM543.8,368 514.8,359.4 517,393.9 545.6,403.1ZM545.6,403.1 517,393.9 519.1,427.3 547.2,437.1ZM547.2,437.1 519.1,427.3 521.2,459.5 548.9,469.8ZM548.9,469.8 521.2,459.5 523.2,490.7 550.4,501.4ZM550.4,501.4 523.2,490.7 525.1,520.8 551.9,532ZM551.9,532 525.1,520.8 526.9,549.9 553.4,561.5ZM553.4,561.5 526.9,549.9 528.7,578.2 554.8,590.1ZM502.4,166 472.2,161.5 475.3,202.3 505.1,207.7ZM505.1,207.7 475.3,202.3 478.4,241.6 507.6,247.8ZM507.6,247.8 478.4,241.6 481.3,279.4 510.1,286.3ZM510.1,286.3 481.3,279.4 484.2,315.9 512.5,323.5ZM512.5,323.5 484.2,315.9 486.9,351.1 514.8,359.4ZM514.8,359.4 486.9,351.1 489.6,385.1 517,393.9ZM517,393.9 489.6,385.1 492.1,417.9 519.1,427.3ZM519.1,427.3 492.1,417.9 494.6,449.7 521.2,459.5ZM521.2,459.5 494.6,449.7 497,480.4 523.2,490.7ZM523.2,490.7 497,480.4 499.3,510 525.1,520.8ZM525.1,520.8 499.3,510 501.5,538.8 526.9,549.9ZM526.9,549.9 501.5,538.8 503.7,566.6 528.7,578.2ZM472.2,161.5 443.3,157.2 447,197.2 475.3,202.3ZM475.3,202.3 447,197.2 450.5,235.7 478.4,241.6ZM478.4,241.6 450.5,235.7 453.9,272.8 481.3,279.4ZM481.3,279.4 453.9,272.8 457.1,308.6 484.2,315.9ZM484.2,315.9 457.1,308.6 460.3,343.2 486.9,351.1ZM486.9,351.1 460.3,343.2 463.3,376.6 489.6,385.1ZM489.6,385.1 463.3,376.6 466.3,408.9 492.1,417.9ZM492.1,417.9 466.3,408.9 469.1,440.2 494.6,449.7ZM494.6,449.7 469.1,440.2 471.9,470.4 497,480.4ZM497,480.4 471.9,470.4 474.5,499.7 499.3,510ZM499.3,510 474.5,499.7 477.1,528.1 501.5,538.8ZM501.5,538.8 477.1,528.1 479.6,555.6 503.7,566.6ZM443.3,157.2 415.8,153.1 419.8,192.3 447,197.2ZM447,197.2 419.8,192.3 423.8,230 450.5,235.7ZM450.5,235.7 423.8,230 427.5,266.5 453.9,272.8ZM453.9,272.8 427.5,266.5 431.2,301.7 457.1,308.6ZM457.1,308.6 431.2,301.7 434.7,335.7 460.3,343.2ZM460.3,343.2 434.7,335.7 438.1,368.5 463.3,376.6ZM463.3,376.6 438.1,368.5 441.4,400.3 466.3,408.9ZM466.3,408.9 441.4,400.3 444.6,431.1 469.1,440.2ZM469.1,440.2 444.6,431.1 447.7,460.9 471.9,470.4ZM471.9,470.4 447.7,460.9 450.7,489.8 474.5,499.7ZM474.5,499.7 450.7,489.8 453.6,517.7 477.1,528.1ZM477.1,528.1 453.6,517.7 456.4,544.9 479.6,555.6ZM415.8,153.1 389.5,149.2 393.9,187.6 419.8,192.3ZM419.8,192.3 393.9,187.6 398.2,224.6 423.8,230ZM423.8,230 398.2,224.6 402.3,260.4 427.5,266.5ZM427.5,266.5 402.3,260.4 406.3,295 431.2,301.7ZM431.2,301.7 406.3,295 410.2,328.4 434.7,335.7ZM434.7,335.7 410.2,328.4 413.9,360.7 438.1,368.5ZM438.1,368.5 413.9,360.7 417.5,392 441.4,400.3ZM441.4,400.3 417.5,392 421,422.3 444.6,431.1ZM444.6,431.1 421,422.3 424.4,451.7 447.7,460.9ZM447.7,460.9 424.4,451.7 427.7,480.2 450.7,489.8ZM450.7,489.8 427.7,480.2 430.9,507.8 453.6,517.7ZM453.6,517.7 430.9,507.8 434,534.6 456.4,544.9ZM389.5,149.2 364.3,145.5 369,183.1 393.9,187.6ZM393.9,187.6 369,183.1 373.7,219.4 398.2,224.6ZM398.2,224.6 373.7,219.4 378.1,254.6 402.3,260.4ZM402.3,260.4 378.1,254.6 382.4,288.5 406.3,295ZM406.3,295 382.4,288.5 386.6,321.4 410.2,328.4ZM410.2,328.4 386.6,321.4 390.6,353.2 413.9,360.7ZM413.9,360.7 390.6,353.2 394.6,384 417.5,392ZM417.5,392 394.6,384 398.4,413.9 421,422.3ZM421,422.3 398.4,413.9 402,442.9 424.4,451.7ZM424.4,451.7 402,442.9 405.6,471 427.7,480.2ZM427.7,480.2 405.6,471 409.1,498.2 430.9,507.8ZM430.9,507.8 409.1,498.2 412.4,524.7 434,534.6ZM749.9,429 770.8,412.9 768.2,451.1 747.6,468.3ZM747.6,468.3 768.2,451.1 765.6,487.8 745.4,505.9ZM745.4,505.9 765.6,487.8 763.2,523 743.3,542.1ZM743.3,542.1 763.2,523 760.9,557 741.3,576.8ZM741.3,576.8 760.9,557 758.6,589.7 739.3,610.2ZM739.3,610.2 758.6,589.7 756.5,621.1 737.4,642.3ZM737.4,642.3 756.5,621.1 754.4,651.5 735.6,673.3ZM770.8,412.9 790.3,397.9 787.3,435.1 768.2,451.1ZM768.2,451.1 787.3,435.1 784.5,470.8 765.6,487.8ZM765.6,487.8 784.5,470.8 781.8,505.3 763.2,523ZM763.2,523 781.8,505.3 779.2,538.5 760.9,557ZM760.9,557 779.2,538.5 776.7,570.4 758.6,589.7ZM758.6,589.7 776.7,570.4 774.3,601.3 756.5,621.1ZM756.5,621.1 774.3,601.3 772,631.1 754.4,651.5ZM790.3,397.9 808.4,383.9 805.3,420.1 787.3,435.1ZM787.3,435.1 805.3,420.1 802.2,455 784.5,470.8ZM784.5,470.8 802.2,455 799.3,488.6 781.8,505.3ZM781.8,505.3 799.3,488.6 796.5,521.1 779.2,538.5ZM779.2,538.5 796.5,521.1 793.7,552.4 776.7,570.4ZM776.7,570.4 793.7,552.4 791.1,582.6 774.3,601.3ZM774.3,601.3 791.1,582.6 788.5,611.8 772,631.1ZM808.4,383.9 825.4,370.8 822.1,406.1 805.3,420.1ZM805.3,420.1 822.1,406.1 818.8,440.1 802.2,455ZM802.2,455 818.8,440.1 815.7,473 799.3,488.6ZM799.3,488.6 815.7,473 812.6,504.7 796.5,521.1ZM796.5,521.1 812.6,504.7 809.7,535.4 793.7,552.4ZM793.7,552.4 809.7,535.4 806.9,565 791.1,582.6ZM791.1,582.6 806.9,565 804.1,593.7 788.5,611.8ZM844.3,172.6 861.2,165.9 856.9,207.4 840.3,215.4ZM840.3,215.4 856.9,207.4 852.8,247.3 836.3,256.5ZM836.3,256.5 852.8,247.3 848.8,285.8 832.6,296.1ZM832.6,296.1 848.8,285.8 845,322.8 828.9,334.1ZM828.9,334.1 845,322.8 841.4,358.5 825.4,370.8ZM825.4,370.8 841.4,358.5 837.8,392.9 822.1,406.1ZM822.1,406.1 837.8,392.9 834.4,426.2 818.8,440.1ZM818.8,440.1 834.4,426.2 831.1,458.3 815.7,473ZM815.7,473 831.1,458.3 827.9,489.4 812.6,504.7ZM812.6,504.7 827.9,489.4 824.8,519.4 809.7,535.4ZM809.7,535.4 824.8,519.4 821.8,548.5 806.9,565ZM806.9,565 821.8,548.5 818.9,576.6 804.1,593.7ZM861.2,165.9 876.9,159.7 872.5,199.9 856.9,207.4ZM856.9,207.4 872.5,199.9 868.2,238.7 852.8,247.3ZM852.8,247.3 868.2,238.7 864.1,276.1 848.8,285.8ZM848.8,285.8 864.1,276.1 860.1,312.2 845,322.8ZM845,322.8 860.1,312.2 856.3,347 841.4,358.5ZM841.4,358.5 856.3,347 852.6,380.6 837.8,392.9ZM837.8,392.9 852.6,380.6 849,413.1 834.4,426.2ZM834.4,426.2 849,413.1 845.6,444.5 831.1,458.3ZM831.1,458.3 845.6,444.5 842.2,474.9 827.9,489.4ZM827.9,489.4 842.2,474.9 839,504.3 824.8,519.4ZM824.8,519.4 839,504.3 835.9,532.8 821.8,548.5ZM821.8,548.5 835.9,532.8 832.8,560.4 818.9,576.6ZM876.9,159.7 891.6,153.9 887.1,193 872.5,199.9ZM872.5,199.9 887.1,193 882.7,230.7 868.2,238.7ZM868.2,238.7 882.7,230.7 878.4,267 864.1,276.1ZM864.1,276.1 878.4,267 874.3,302.2 860.1,312.2ZM860.1,312.2 874.3,302.2 870.4,336.1 856.3,347ZM856.3,347 870.4,336.1 866.6,368.9 852.6,380.6ZM852.6,380.6 866.6,368.9 862.9,400.7 849,413.1ZM849,413.1 862.9,400.7 859.3,431.4 845.6,444.5ZM845.6,444.5 859.3,431.4 855.8,461.2 842.2,474.9ZM842.2,474.9 855.8,461.2 852.5,490 839,504.3ZM839,504.3 852.5,490 849.2,518 835.9,532.8ZM835.9,532.8 849.2,518 846,545.1 832.8,560.4ZM891.6,153.9 905.4,148.4 900.7,186.4 887.1,193ZM887.1,193 900.7,186.4 896.3,223.1 882.7,230.7ZM882.7,230.7 896.3,223.1 891.9,258.5 878.4,267ZM878.4,267 891.9,258.5 887.7,292.8 874.3,302.2ZM874.3,302.2 887.7,292.8 883.6,325.9 870.4,336.1ZM870.4,336.1 883.6,325.9 879.7,357.9 866.6,368.9ZM866.6,368.9 879.7,357.9 875.9,389 862.9,400.7ZM862.9,400.7 875.9,389 872.2,419.1 859.3,431.4ZM859.3,431.4 872.2,419.1 868.7,448.2 855.8,461.2ZM855.8,461.2 868.7,448.2 865.2,476.5 852.5,490ZM852.5,490 865.2,476.5 861.8,503.9 849.2,518ZM849.2,518 861.8,503.9 858.6,530.5 846,545.1ZM905.4,148.4 918.4,143.3 913.6,180.2 900.7,186.4ZM900.7,186.4 913.6,180.2 909,215.9 896.3,223.1ZM896.3,223.1 909,215.9 904.6,250.5 891.9,258.5ZM891.9,258.5 904.6,250.5 900.3,283.9 887.7,292.8ZM887.7,292.8 900.3,283.9 896.2,316.2 883.6,325.9ZM883.6,325.9 896.2,316.2 892.2,347.6 879.7,357.9ZM879.7,357.9 892.2,347.6 888.3,377.9 875.9,389ZM875.9,389 888.3,377.9 884.5,407.4 872.2,419.1ZM872.2,419.1 884.5,407.4 880.8,435.9 868.7,448.2ZM868.7,448.2 880.8,435.9 877.3,463.6 865.2,476.5ZM865.2,476.5 877.3,463.6 873.8,490.6 861.8,503.9ZM861.8,503.9 873.8,490.6 870.5,516.7 858.6,530.5ZM918.4,143.3 930.5,138.5 925.7,174.4 913.6,180.2ZM913.6,180.2 925.7,174.4 921.1,209.2 909,215.9ZM909,215.9 921.1,209.2 916.6,242.9 904.6,250.5ZM904.6,250.5 916.6,242.9 912.2,275.5 900.3,283.9ZM900.3,283.9 912.2,275.5 908,307.1 896.2,316.2ZM896.2,316.2 908,307.1 903.9,337.7 892.2,347.6ZM892.2,347.6 903.9,337.7 900,367.4 888.3,377.9ZM888.3,377.9 900,367.4 896.1,396.3 884.5,407.4ZM884.5,407.4 896.1,396.3 892.4,424.3 880.8,435.9ZM880.8,435.9 892.4,424.3 888.7,451.5 877.3,463.6ZM877.3,463.6 888.7,451.5 885.2,477.9 873.8,490.6ZM873.8,490.6 885.2,477.9 881.8,503.6 870.5,516.7ZM930.5,138.5 942,133.9 937.2,169 925.7,174.4ZM925.7,174.4 937.2,169 932.5,202.9 921.1,209.2ZM921.1,209.2 932.5,202.9 927.9,235.7 916.6,242.9ZM916.6,242.9 927.9,235.7 923.5,267.6 912.2,275.5ZM912.2,275.5 923.5,267.6 919.2,298.4 908,307.1ZM908,307.1 919.2,298.4 915.1,328.4 903.9,337.7ZM903.9,337.7 915.1,328.4 911.1,357.5 900,367.4ZM900,367.4 911.1,357.5 907.2,385.8 896.1,396.3ZM896.1,396.3 907.2,385.8 903.3,413.2 892.4,424.3ZM892.4,424.3 903.3,413.2 899.7,439.9 888.7,451.5ZM888.7,451.5 899.7,439.9 896.1,465.8 885.2,477.9ZM885.2,477.9 896.1,465.8 892.6,491 881.8,503.6ZM942,133.9 952.9,129.7 948,163.8 937.2,169ZM937.2,169 948,163.8 943.3,196.9 932.5,202.9ZM932.5,202.9 943.3,196.9 938.7,228.9 927.9,235.7ZM927.9,235.7 938.7,228.9 934.2,260 923.5,267.6ZM923.5,267.6 934.2,260 929.9,290.2 919.2,298.4ZM919.2,298.4 929.9,290.2 925.7,319.6 915.1,328.4ZM915.1,328.4 925.7,319.6 921.6,348.1 911.1,357.5ZM911.1,357.5 921.6,348.1 917.6,375.7 907.2,385.8ZM907.2,385.8 917.6,375.7 913.8,402.7 903.3,413.2ZM903.3,413.2 913.8,402.7 910,428.8 899.7,439.9ZM899.7,439.9 910,428.8 906.4,454.3 896.1,465.8ZM896.1,465.8 906.4,454.3 902.8,479.1 892.6,491ZM602.5,180.9 628.7,173.6 629,216.7 603.3,225.4ZM603.3,225.4 629,216.7 629.2,258.2 604,268.1ZM604,268.1 629.2,258.2 629.4,298 604.7,309.1ZM604.7,309.1 629.4,298 629.6,336.3 605.4,348.5ZM605.4,348.5 629.6,336.3 629.8,373.1 606.1,386.4ZM628.7,173.6 653.2,166.9 652.9,208.7 629,216.7ZM629,216.7 652.9,208.7 652.7,248.8 629.2,258.2ZM629.2,258.2 652.7,248.8 652.4,287.5 629.4,298ZM629.4,298 652.4,287.5 652.2,324.8 629.6,336.3ZM629.6,336.3 652.2,324.8 652,360.7 629.8,373.1ZM653.2,166.9 676,160.6 675.3,201.1 652.9,208.7ZM652.9,208.7 675.3,201.1 674.7,240.1 652.7,248.8ZM652.7,248.8 674.7,240.1 674,277.8 652.4,287.5ZM652.4,287.5 674,277.8 673.4,314 652.2,324.8ZM652.2,324.8 673.4,314 672.8,349 652,360.7ZM676,160.6 697.3,154.7 696.3,194 675.3,201.1ZM675.3,201.1 696.3,194 695.3,232 674.7,240.1ZM674.7,240.1 695.3,232 694.3,268.6 674,277.8ZM674,277.8 694.3,268.6 693.4,303.9 673.4,314ZM673.4,314 693.4,303.9 692.5,338 672.8,349ZM844.3,172.6 804.9,167.8 801.7,209.7 840.3,215.4ZM840.3,215.4 801.7,209.7 798.6,249.9 836.3,256.5ZM836.3,256.5 798.6,249.9 795.6,288.7 832.6,296.1ZM832.6,296.1 795.6,288.7 792.8,326.1 828.9,334.1ZM828.9,334.1 792.8,326.1 790,362 825.4,370.8ZM804.9,167.8 767.4,163.2 764.9,204.2 801.7,209.7ZM801.7,209.7 764.9,204.2 762.6,243.7 798.6,249.9ZM798.6,249.9 762.6,243.7 760.3,281.7 795.6,288.7ZM795.6,288.7 760.3,281.7 758.2,318.4 792.8,326.1ZM792.8,326.1 758.2,318.4 756.1,353.7 790,362ZM767.4,163.2 731.5,158.9 729.8,199 764.9,204.2ZM764.9,204.2 729.8,199 728.2,237.7 762.6,243.7ZM762.6,243.7 728.2,237.7 726.6,275 760.3,281.7ZM760.3,281.7 726.6,275 725.1,311 758.2,318.4ZM758.2,318.4 725.1,311 723.6,345.7 756.1,353.7ZM731.5,158.9 697.3,154.7 696.3,194 729.8,199ZM729.8,199 696.3,194 695.3,232 728.2,237.7ZM728.2,237.7 695.3,232 694.3,268.6 726.6,275ZM726.6,275 694.3,268.6 693.4,303.9 725.1,311ZM725.1,311 693.4,303.9 692.5,338 723.6,345.7Z"/>
</g>
<g stroke="#000" fill="#000" stroke-linecap="butt">
<line x1="729.4" y1="442.8" x2="730.5" y2="421.4" stroke-width="1.8"/><path stroke="none" d="M727.2,423 727.2,422.8 730.9,414.6 733.2,424 733,424.2 732.7,424.3 732.4,424.4 732,424.5 731.6,424.6 731.2,424.6 730.8,424.6 730.4,424.6 730,424.6 729.6,424.6 729.2,424.5 728.8,424.4 728.4,424.2 728.1,424.1 727.9,423.9 727.6,423.8 727.4,423.6 727.3,423.4 727.2,423.2Z"/>
<line x1="727.5" y1="480.9" x2="728.7" y2="462.6" stroke-width="1.6"/><path stroke="none" d="M725.7,463.9 725.8,463.7 725.8,463.5 729.1,456.7 731.3,464.8 731.1,464.9 730.9,465.1 730.6,465.2 730.4,465.3 730,465.4 729.7,465.5 729.4,465.6 729,465.6 728.6,465.6 728.2,465.5 727.9,465.5 727.5,465.4 727.2,465.3 726.9,465.1 726.6,465 726.3,464.8 726.1,464.7 726,464.5 725.8,464.3 725.8,464.1Z"/>
<line x1="725.8" y1="517.5" x2="726.9" y2="503.2" stroke-width="1.2"/><path stroke="none" d="M724.5,504.2 724.5,504.1 724.5,503.9 727.2,498.7 729.1,504.7 729,504.9 728.9,505.1 728.8,505.2 728.6,505.3 728.4,505.5 728.2,505.6 728,505.7 727.7,505.7 727.4,505.8 727.1,505.8 726.8,505.8 726.5,505.7 726.2,505.7 725.9,505.6 725.6,505.5 725.4,505.4 725.1,505.2 724.9,505.1 724.8,504.9 724.6,504.8 724.5,504.6 724.5,504.4Z"/>
<line x1="724.1" y1="552.6" x2="725" y2="542.7" stroke-width="1"/><path stroke="none" d="M723.2,543.3 723.2,543.2 723.3,543 725.3,539.5 726.7,543.6 726.6,543.7 726.6,543.9 726.5,544 726.4,544.1 726.3,544.2 726.1,544.4 726,544.4 725.8,544.5 725.6,544.5 725.4,544.6 725.1,544.6 724.9,544.6 724.7,544.6 724.5,544.5 724.3,544.5 724.1,544.4 723.9,544.3 723.7,544.2 723.6,544 723.4,543.9 723.3,543.8 723.3,543.6 723.2,543.5Z"/>
<line x1="722.5" y1="586.4" x2="723.2" y2="580.3" stroke-width="1"/><path stroke="none" d="M722,580.6 722,580.5 722,580.4 722.1,580.3 723.4,578.3 724.2,580.6 724.3,580.7 724.3,580.9 724.3,581 724.2,581.1 724.2,581.2 724.1,581.2 724,581.3 723.9,581.4 723.8,581.5 723.7,581.5 723.5,581.5 723.4,581.6 723.2,581.6 723.1,581.6 723,581.6 722.8,581.5 722.7,581.5 722.5,581.4 722.4,581.3 722.3,581.3 722.2,581.2 722.1,581.1 722.1,581 722,580.9 722,580.8Z"/>
<line x1="720.9" y1="618.9" x2="721.6" y2="614.9" stroke-width="1.3"/>
<line x1="719.4" y1="650.3" x2="719.9" y2="649.7" stroke-width="1.3"/>
<line x1="692.1" y1="431.3" x2="693.3" y2="409.4" stroke-width="1.9"/><path stroke="none" d="M689.9,411 690,410.8 693.7,402.4 696,412.1 695.7,412.2 695.4,412.4 695.1,412.5 694.7,412.6 694.3,412.6 693.9,412.7 693.5,412.7 693.1,412.7 692.6,412.6 692.2,412.6 691.8,412.5 691.4,412.4 691.1,412.2 690.8,412.1 690.5,411.9 690.3,411.8 690.1,411.6 690,411.4 689.9,411.2Z"/>
<line x1="691" y1="468.7" x2="693.2" y2="450.4" stroke-width="1.6"/><path stroke="none" d="M690.1,451.5 690.2,451.3 690.2,451.1 693.9,444.5 695.7,452.7 695.5,452.9 695.3,453.1 695,453.2 694.7,453.3 694.4,453.4 694,453.4 693.7,453.4 693.3,453.4 692.9,453.4 692.5,453.4 692.2,453.3 691.8,453.2 691.5,453 691.2,452.9 690.9,452.7 690.6,452.5 690.4,452.3 690.3,452.1 690.2,451.9 690.1,451.7Z"/>
<line x1="690" y1="504.6" x2="692.7" y2="490.9" stroke-width="1.2"/><path stroke="none" d="M690.1,491.7 690.2,491.5 690.2,491.3 690.4,491.1 693.5,486.6 694.7,492.8 694.6,492.9 694.4,493.1 694.2,493.2 694,493.4 693.8,493.4 693.5,493.5 693.2,493.6 693,493.6 692.6,493.6 692.4,493.5 692,493.5 691.8,493.4 691.5,493.3 691.2,493.1 691,493 690.7,492.8 690.5,492.6 690.4,492.5 690.3,492.3 690.2,492.1 690.1,491.9Z"/>
<line x1="689.1" y1="539.2" x2="691.7" y2="530.2" stroke-width="1"/><path stroke="none" d="M689.8,530.5 689.8,530.4 689.9,530.2 690,530.1 692.5,527.3 693.1,531.2 693.1,531.4 693.1,531.5 693,531.7 692.9,531.8 692.7,531.9 692.6,532 692.4,532 692.2,532.1 692,532.1 691.8,532.1 691.6,532.1 691.3,532.1 691.1,532 690.9,532 690.7,531.9 690.5,531.8 690.3,531.6 690.2,531.5 690,531.3 689.9,531.2 689.9,531 689.8,530.9 689.8,530.7Z"/>
<line x1="688.1" y1="572.5" x2="690.3" y2="567.3" stroke-width="1"/><path stroke="none" d="M689.1,567.5 689.1,567.4 689.1,567.3 689.1,567.2 689.2,567.1 689.3,567 689.4,566.9 691,565.6 691.3,567.9 691.3,568 691.2,568.1 691.2,568.2 691.1,568.3 691.1,568.4 691,568.5 690.9,568.5 690.8,568.6 690.6,568.6 690.5,568.6 690.4,568.6 690.2,568.6 690.1,568.6 689.9,568.5 689.8,568.5 689.6,568.4 689.5,568.3 689.4,568.2 689.3,568.1 689.2,568 689.2,567.9 689.1,567.8 689.1,567.7Z"/>
<line x1="687.3" y1="604.5" x2="689.6" y2="601.6" stroke-width="1.3"/>
<line x1="686.4" y1="635.4" x2="688.4" y2="635.6" stroke-width="1.3"/>
<line x1="656.6" y1="420.3" x2="658" y2="396.7" stroke-width="2"/><path stroke="none" d="M654.4,398.6 654.4,398.3 654.4,398.1 658.5,389.2 660.8,399.7 660.6,399.9 660.2,400 659.9,400.1 659.5,400.2 659,400.2 658.6,400.3 658.1,400.3 657.7,400.2 657.2,400.2 656.8,400.1 656.3,400 655.9,399.9 655.5,399.7 655.2,399.6 655,399.4 654.7,399.2 654.5,399 654.4,398.8Z"/>
<line x1="656.2" y1="457" x2="659.9" y2="437.9" stroke-width="1.7"/><path stroke="none" d="M656.4,439.1 656.5,438.9 656.5,438.6 656.6,438.4 661,431.7 662.3,440.6 662.1,440.8 661.9,440.9 661.6,441.1 661.3,441.2 660.9,441.2 660.5,441.3 660.1,441.3 659.7,441.2 659.3,441.2 658.9,441.1 658.5,441 658.1,440.9 657.8,440.7 657.5,440.5 657.2,440.3 656.9,440.1 656.7,439.8 656.6,439.6 656.5,439.3Z"/>
<line x1="655.9" y1="492.4" x2="660.8" y2="479" stroke-width="1.2"/><path stroke="none" d="M658,479.6 658,479.4 658.1,479.2 658.2,479 658.3,478.8 662.4,474.7 662.7,481.2 662.6,481.4 662.4,481.5 662.2,481.6 662,481.8 661.7,481.8 661.5,481.9 661.1,481.9 660.8,481.9 660.5,481.9 660.2,481.8 659.9,481.7 659.6,481.6 659.3,481.4 659,481.2 658.8,481 658.5,480.8 658.4,480.6 658.2,480.4 658.1,480.1 658,479.9Z"/>
<line x1="655.6" y1="526.4" x2="660.4" y2="518.9" stroke-width="1"/><path stroke="none" d="M658.4,519 658.4,518.9 658.5,518.7 658.5,518.5 658.6,518.4 658.7,518.3 658.9,518.2 661.9,516.5 661.6,520.2 661.5,520.4 661.4,520.5 661.3,520.7 661.1,520.8 661,520.8 660.8,520.9 660.6,520.9 660.4,520.9 660.2,520.9 660,520.9 659.8,520.8 659.6,520.7 659.4,520.6 659.2,520.5 659,520.3 658.8,520.2 658.7,520 658.6,519.8 658.5,519.6 658.4,519.4 658.4,519.2Z"/>
<line x1="655.3" y1="559.1" x2="659" y2="555.4" stroke-width="1" stroke-opacity="0.7"/><path stroke="none" d="M657.7,555.4 657.7,555.2 657.8,555.1 657.8,555 657.9,554.9 658,554.8 658.1,554.8 658.2,554.7 658.3,554.7 660.2,554.2 659.7,556.1 659.7,556.2 659.6,556.4 659.6,556.5 659.5,556.5 659.4,556.6 659.3,556.7 659.2,556.7 659.1,556.7 658.9,556.7 658.8,556.7 658.7,556.7 658.5,556.6 658.4,556.6 658.3,556.5 658.2,556.4 658,556.3 658,556.2 657.9,556 657.8,555.9 657.8,555.8 657.7,555.6 657.7,555.5Z"/>
<line x1="655" y1="590.7" x2="658.8" y2="589" stroke-width="1.3"/>
<line x1="654.8" y1="621.2" x2="658" y2="622.1" stroke-width="1.3"/>
<line x1="622.7" y1="409.9" x2="622.8" y2="384.5" stroke-width="2.2"/><path stroke="none" d="M619,386.5 619,386.3 622.8,376.3 625.8,387.4 625.5,387.6 625.1,387.8 624.7,387.9 624.3,388 623.8,388 623.4,388.1 622.9,388.1 622.4,388.1 621.9,388.1 621.4,388 621,387.9 620.6,387.8 620.2,387.6 619.9,387.5 619.6,387.3 619.3,387.1 619.2,386.9 619.1,386.7Z"/>
<line x1="623" y1="445.9" x2="628.8" y2="420.6" stroke-width="2.2"/><path stroke="none" d="M624.2,422.1 624.2,421.8 624.3,421.5 624.5,421.2 630.7,412.5 631.7,424.7 631.3,424.9 630.9,425 630.5,425.1 630,425.2 629.5,425.2 629,425.2 628.4,425.2 627.9,425.1 627.3,424.9 626.8,424.8 626.3,424.6 625.9,424.3 625.4,424 625.1,423.7 624.8,423.4 624.5,423.1 624.3,422.8 624.2,422.4Z"/>
<line x1="623.4" y1="480.7" x2="633.6" y2="469.8" stroke-width="1.3"/><path stroke="none" d="M630.2,469.7 630.3,469.4 630.4,469.1 630.5,468.9 630.7,468.7 630.9,468.5 631.1,468.4 636.9,466.3 634.8,472.7 634.6,472.9 634.4,473 634.1,473.1 633.8,473.2 633.5,473.2 633.2,473.2 632.9,473.1 632.5,473 632.2,472.9 631.9,472.7 631.6,472.4 631.3,472.2 631,471.9 630.8,471.6 630.6,471.3 630.5,471 630.3,470.7 630.2,470.3 630.2,470Z"/>
<line x1="623.7" y1="514.1" x2="631.1" y2="510.1" stroke-width="1"/><path stroke="none" d="M629.1,509.9 629.1,509.7 629.1,509.5 629.2,509.3 629.3,509.2 629.4,509 629.6,508.9 629.7,508.8 629.9,508.8 630,508.7 633.5,508.7 631.7,511.6 631.6,511.7 631.5,511.8 631.3,511.9 631.1,512 631,512 630.8,512 630.6,512 630.4,512 630.2,511.9 630,511.8 629.9,511.7 629.7,511.5 629.6,511.4 629.4,511.2 629.3,511 629.2,510.8 629.1,510.6 629.1,510.3 629.1,510.1Z"/>
<line x1="623.9" y1="546.4" x2="628.8" y2="544.5" stroke-width="1" stroke-opacity="0.7"/><path stroke="none" d="M627.5,544.5 627.5,544.4 627.5,544.2 627.5,544.1 627.6,544 627.7,543.9 627.7,543.8 627.8,543.7 627.9,543.6 628,543.6 628.1,543.6 628.2,543.6 630.3,543.9 629,545.5 629,545.6 628.9,545.7 628.8,545.7 628.6,545.7 628.5,545.8 628.4,545.7 628.3,545.7 628.2,545.7 628.1,545.6 628,545.5 627.9,545.4 627.8,545.3 627.7,545.2 627.6,544.9 627.5,544.8 627.5,544.6Z"/>
<line x1="624.2" y1="577.5" x2="628.9" y2="577.1" stroke-width="1.3"/>
<line x1="624.5" y1="607.6" x2="628.5" y2="609" stroke-width="1.3"/>
<line x1="592.2" y1="469.5" x2="611" y2="472.3" stroke-width="1.6"/><path stroke="none" d="M607.4,472.6 607.4,472.2 607.4,471.8 607.5,471.3 607.6,470.9 607.8,470.6 608,470.2 608.2,469.9 608.4,469.6 608.6,469.3 608.9,469.1 609.2,469 617,473.3 609.5,475.3 609.2,475.4 609,475.3 608.7,475.3 608.5,475.1 608.2,475 608,474.7 607.8,474.5 607.7,474.2 607.5,473.8 607.5,473.4 607.4,473Z"/>
<line x1="593.1" y1="502.4" x2="601.1" y2="502.3" stroke-width="1"/><path stroke="none" d="M599.4,502.2 599.4,502 599.4,501.8 599.5,501.6 599.5,501.5 599.6,501.3 599.7,501.2 599.9,501 600,500.9 600.1,500.9 600.2,500.8 600.4,500.8 603.6,502.3 600.8,503.8 600.6,503.8 600.5,503.9 600.4,503.9 600.2,503.8 600.1,503.8 600,503.7 599.8,503.6 599.7,503.5 599.6,503.3 599.5,503.2 599.5,503 599.4,502.8 599.4,502.6 599.4,502.4Z"/>
<line x1="593.9" y1="534.2" x2="599.1" y2="534.3" stroke-width="1" stroke-opacity="0.7"/><path stroke="none" d="M598,534.2 598,534.1 598,534 598,533.8 598.1,533.7 598.1,533.6 598.2,533.5 598.3,533.4 598.4,533.4 598.5,533.3 598.5,533.3 598.6,533.2 598.8,533.2 600.8,534.3 598.9,535.2 598.8,535.3 598.7,535.3 598.6,535.3 598.5,535.3 598.5,535.2 598.4,535.2 598.3,535.1 598.2,535 598.1,535 598.1,534.9 598,534.7 598,534.6 598,534.5 598,534.3Z"/>
<line x1="594.7" y1="564.9" x2="598.5" y2="565.5" stroke-width="1" stroke-opacity="0.7"/><path stroke="none" d="M597.7,565.5 597.7,565.4 597.7,565.3 597.8,565.2 597.8,565.1 597.9,565 597.9,564.9 598,564.9 598,564.8 598.1,564.8 598.2,564.8 598.2,564.7 598.4,564.7 599.7,565.7 598.2,566.2 598.1,566.2 598.1,566.2 598,566.2 597.9,566.1 597.9,566.1 597.8,566 597.8,566 597.8,565.9 597.7,565.8 597.7,565.7 597.7,565.6Z"/>
<line x1="595.5" y1="594.5" x2="599.7" y2="596.4" stroke-width="1.3"/>
<line x1="551.5" y1="194.9" x2="551.7" y2="199.4" stroke-width="1" stroke-opacity="0.7"/><path stroke="none" d="M551,199.1 551.1,199.1 551.1,199 551.1,199 551.2,199 552.1,199.1 551.7,200.8 551,199.1Z"/>
<line x1="553.2" y1="237.1" x2="553.4" y2="241.6" stroke-width="1" stroke-opacity="0.7"/><path stroke="none" d="M552.8,241.2 552.8,241.2 552.9,241.2 553,241.1 553.9,241.3 553.5,243 552.8,241.2Z"/>
<line x1="554.9" y1="277.7" x2="555.1" y2="282.2" stroke-width="1" stroke-opacity="0.7"/><path stroke="none" d="M554.5,281.8 554.5,281.8 554.5,281.8 554.6,281.8 554.6,281.8 554.7,281.7 555.6,281.9 555.2,283.6Z"/>
<line x1="556.5" y1="316.6" x2="556.9" y2="323" stroke-width="1" stroke-opacity="0.7"/>
<line x1="558.1" y1="354.2" x2="558.7" y2="361.3" stroke-width="1"/>
<line x1="559.6" y1="390.3" x2="560.6" y2="399.2" stroke-width="1"/>
<line x1="561.1" y1="425.2" x2="565.6" y2="436.7" stroke-width="1.1"/><path stroke="none" d="M563.7,436.4 563.7,436.3 563.7,436.3 563.8,436.2 563.9,436.2 564,436.1 564.1,436 564.2,435.9 566.5,435.4 567,440.3Z"/>
<line x1="562.5" y1="458.8" x2="570.5" y2="466.5" stroke-width="1"/><path stroke="none" d="M568.8,466.8 568.8,466.7 568.8,466.6 568.9,466.5 569,466.3 569,466.2 569.1,466 569.3,465.9 569.4,465.7 569.5,465.6 569.7,465.4 569.8,465.3 570,465.2 570.1,465.1 570.3,464.9 570.4,464.9 570.5,464.8 570.6,464.8 573.1,468.9 568.9,467.1 568.8,467 568.8,467 568.8,466.9Z"/>
<line x1="563.8" y1="491.2" x2="570.6" y2="494" stroke-width="1"/><path stroke="none" d="M569.3,494.1 569.3,494 569.3,493.9 569.4,493.7 569.4,493.5 569.6,493.3 569.6,493.1 569.7,493 569.8,492.9 569.9,492.8 570,492.7 570.1,492.7 570.3,492.6 572.8,494.9 569.8,494.9 569.7,494.9 569.6,494.9 569.6,494.9 569.5,494.8 569.4,494.7 569.4,494.6 569.3,494.5 569.3,494.4 569.3,494.3Z"/>
<line x1="565.1" y1="522.5" x2="569.8" y2="524" stroke-width="1" stroke-opacity="0.7"/><path stroke="none" d="M568.8,524 568.8,523.9 568.9,523.8 568.9,523.7 568.9,523.6 569,523.5 569,523.4 569.1,523.3 569.1,523.2 569.2,523.2 569.3,523.1 569.4,523.1 569.5,523.1 569.5,523 571.3,524.5 569.4,524.7 569.3,524.7 569.2,524.7 569.1,524.7 569.1,524.7 569,524.6 568.9,524.5 568.9,524.4 568.9,524.4 568.8,524.3 568.8,524.1Z"/>
<line x1="566.4" y1="552.8" x2="570" y2="554.1" stroke-width="1" stroke-opacity="0.7"/><path stroke="none" d="M569.2,554 569.3,553.8 569.3,553.8 569.4,553.6 569.4,553.5 569.5,553.5 569.5,553.4 569.7,553.3 569.8,553.3 569.8,553.3 571.1,554.5 569.5,554.6 569.5,554.6 569.4,554.6 569.4,554.5 569.3,554.5 569.3,554.5 569.3,554.4 569.2,554.3 569.2,554.3Z"/>
<line x1="567.6" y1="582" x2="571.7" y2="584" stroke-width="1.3"/>
<line x1="519.3" y1="189.6" x2="519.5" y2="194" stroke-width="1" stroke-opacity="0.7"/><path stroke="none" d="M518.9,193.6 519,193.6 519,193.6 519.1,193.5 519.9,193.7 519.6,195.3 518.9,193.6Z"/>
<line x1="521.6" y1="230.9" x2="521.9" y2="235.2" stroke-width="1" stroke-opacity="0.7"/><path stroke="none" d="M521.3,234.9 521.4,234.8 521.4,234.8 521.4,234.8 521.5,234.8 522.3,234.9 522,236.6 521.3,234.9Z"/>
<line x1="523.9" y1="270.6" x2="524.3" y2="275" stroke-width="1" stroke-opacity="0.7"/><path stroke="none" d="M523.7,274.7 523.7,274.6 523.7,274.6 523.7,274.6 523.8,274.6 523.8,274.6 524.7,274.7 524.4,276.4 523.7,274.7Z"/>
<line x1="526" y1="308.9" x2="526.6" y2="313.4" stroke-width="1" stroke-opacity="0.7"/><path stroke="none" d="M526,313.1 526,313.1 526,313.1 526,313.1 526.1,313 526.1,313 527,313.1 526.8,314.9 526,313.2 526,313.1Z"/>
<line x1="528.1" y1="345.7" x2="529.1" y2="350.7" stroke-width="1" stroke-opacity="0.7"/><path stroke="none" d="M528.3,350.4 528.3,350.4 528.3,350.4 528.3,350.4 528.4,350.3 528.5,350.3 529.5,350.3 529.4,352.3 528.3,350.5Z"/>
<line x1="530.1" y1="381.2" x2="532" y2="387.1" stroke-width="1"/><path stroke="none" d="M531,386.9 531.1,386.9 531.1,386.8 531.3,386.7 531.4,386.7 532.5,386.5 532.6,389Z"/>
<line x1="532.1" y1="415.5" x2="535.3" y2="421.5" stroke-width="1"/><path stroke="none" d="M534.2,421.4 534.2,421.4 534.4,421.3 534.9,421.1 535.1,421 535.5,420.8 535.6,420.7 535.7,420.7 536.3,423.4 534.2,421.5Z"/>
<line x1="533.9" y1="448.5" x2="538.2" y2="453.7" stroke-width="1"/><path stroke="none" d="M537.1,453.8 537.1,453.7 537.2,453.6 537.3,453.5 537.3,453.4 537.4,453.4 537.6,453.1 537.8,453.1 537.8,453 538,452.9 538.1,452.8 538.2,452.8 538.4,452.7 539.5,455.3 537.1,453.8 537.1,453.8Z"/>
<line x1="535.8" y1="480.4" x2="540.1" y2="483.9" stroke-width="1"/><path stroke="none" d="M539.1,484 539.2,483.9 539.2,483.7 539.3,483.6 539.3,483.6 539.4,483.5 539.4,483.4 539.6,483.2 539.7,483.1 539.9,483 539.9,483 540,482.9 541.4,484.9 539.3,484.2 539.2,484.2 539.2,484.2 539.2,484.2 539.1,484.1Z"/>
<line x1="537.5" y1="511.3" x2="541.2" y2="513.4" stroke-width="1" stroke-opacity="0.7"/><path stroke="none" d="M540.4,513.5 540.4,513.4 540.5,513.2 540.6,513 540.7,512.9 540.7,512.8 540.8,512.8 540.9,512.7 541,512.7 541,512.6 541.1,512.6 542.3,514.1 540.6,513.9 540.6,513.9 540.5,513.8 540.5,513.8 540.5,513.8 540.4,513.7 540.4,513.7 540.4,513.6Z"/>
<line x1="539.2" y1="541.1" x2="543.2" y2="543.2" stroke-width="1.3"/>
<line x1="540.8" y1="570" x2="544.4" y2="571.9" stroke-width="1.3"/>
<line x1="488.6" y1="184.5" x2="488.9" y2="188.7" stroke-width="1" stroke-opacity="0.7"/><path stroke="none" d="M488.3,188.4 488.3,188.4 488.4,188.3 488.4,188.3 488.5,188.3 489.3,188.4 489,190Z"/>
<line x1="491.4" y1="225" x2="491.9" y2="229.1" stroke-width="1" stroke-opacity="0.7"/><path stroke="none" d="M491.3,228.8 491.3,228.8 491.4,228.7 491.4,228.7 492.2,228.8 492,230.3Z"/>
<line x1="494.2" y1="263.9" x2="494.7" y2="268" stroke-width="1" stroke-opacity="0.7"/><path stroke="none" d="M494.1,267.7 494.2,267.7 494.2,267.7 494.2,267.7 494.2,267.7 494.3,267.6 495.1,267.7 494.9,269.3Z"/>
<line x1="496.9" y1="301.4" x2="497.6" y2="305.6" stroke-width="1" stroke-opacity="0.7"/><path stroke="none" d="M497,305.4 497,305.3 497,305.3 497.1,305.3 497.1,305.3 497.9,305.3 497.8,306.9 497,305.4Z"/>
<line x1="499.4" y1="337.6" x2="500.5" y2="342" stroke-width="1" stroke-opacity="0.7"/><path stroke="none" d="M499.9,341.7 499.9,341.7 500,341.7 500,341.6 500.1,341.6 500.9,341.6 500.9,343.3 499.9,341.8Z"/>
<line x1="501.9" y1="372.5" x2="503.5" y2="377" stroke-width="1" stroke-opacity="0.7"/><path stroke="none" d="M502.8,376.8 502.8,376.8 503,376.7 503,376.7 503.1,376.7 503.9,376.5 504.1,378.4 502.8,376.8Z"/>
<line x1="504.3" y1="406.2" x2="506.5" y2="410.5" stroke-width="1" stroke-opacity="0.7"/><path stroke="none" d="M505.8,410.4 505.8,410.4 505.8,410.4 505.9,410.3 506,410.3 506.2,410.2 506.3,410.1 506.5,410 506.8,409.9 506.8,409.9 507.2,411.8Z"/>
<line x1="506.6" y1="438.7" x2="509.3" y2="442.4" stroke-width="1" stroke-opacity="0.7"/><path stroke="none" d="M508.6,442.4 508.6,442.4 508.6,442.3 508.7,442.3 508.8,442.1 509,442.1 509.1,442 509.2,441.9 509.3,441.8 509.4,441.8 509.5,441.8 510.1,443.6 508.6,442.5 508.6,442.5Z"/>
<line x1="508.9" y1="470.1" x2="511.6" y2="473" stroke-width="1" stroke-opacity="0.7"/><path stroke="none" d="M511,473.1 511,473.1 511,473 511,472.9 511.1,472.9 511.1,472.8 511.2,472.7 511.4,472.6 511.5,472.5 511.5,472.5 511.6,472.4 511.6,472.4 511.7,472.4 512.5,473.9 511,473.2 511,473.2 511,473.2Z"/>
<line x1="511" y1="500.5" x2="514.5" y2="503.3" stroke-width="1.3"/>
<line x1="513.1" y1="530" x2="516.2" y2="532" stroke-width="1.3"/>
<line x1="515.1" y1="558.4" x2="518" y2="560.1" stroke-width="1.3"/>
<line x1="459.3" y1="179.7" x2="459.7" y2="183.7" stroke-width="1" stroke-opacity="0.7"/><path stroke="none" d="M459.1,183.4 459.1,183.3 459.2,183.3 459.2,183.3 459.3,183.3 460,183.4 459.8,184.9Z"/>
<line x1="462.7" y1="219.3" x2="463.1" y2="223.2" stroke-width="1" stroke-opacity="0.7"/><path stroke="none" d="M462.6,222.9 462.6,222.9 462.6,222.9 462.7,222.8 462.7,222.8 463.4,222.9 463.2,224.4Z"/>
<line x1="465.9" y1="257.5" x2="466.4" y2="261.3" stroke-width="1" stroke-opacity="0.7"/><path stroke="none" d="M465.9,261 465.9,261 465.9,261 466,261 466,261 466.8,261 466.6,262.5 465.9,261.1Z"/>
<line x1="469" y1="294.3" x2="469.7" y2="298.1" stroke-width="1" stroke-opacity="0.7"/><path stroke="none" d="M469.1,297.9 469.2,297.9 469.2,297.8 469.2,297.8 469.3,297.8 469.3,297.8 470,297.8 469.9,299.3Z"/>
<line x1="472" y1="329.8" x2="473" y2="333.6" stroke-width="1" stroke-opacity="0.7"/><path stroke="none" d="M472.4,333.4 472.4,333.3 472.5,333.3 472.5,333.3 472.6,333.3 473.3,333.2 473.3,334.7 472.4,333.4Z"/>
<line x1="474.9" y1="364.1" x2="476.2" y2="367.7" stroke-width="1" stroke-opacity="0.7"/><path stroke="none" d="M475.6,367.6 475.6,367.6 475.6,367.6 475.7,367.6 475.7,367.5 475.8,367.5 476.4,367.4 476.6,368.9Z"/>
<line x1="477.7" y1="397.3" x2="479.8" y2="401.7" stroke-width="1" stroke-opacity="0.7"/>
<line x1="480.4" y1="429.3" x2="482.7" y2="433.1" stroke-width="1" stroke-opacity="0.7"/>
<line x1="483" y1="460.2" x2="485.5" y2="463.4" stroke-width="1" stroke-opacity="0.7"/>
<line x1="485.6" y1="490.2" x2="487.9" y2="492.6" stroke-width="1.3"/>
<line x1="488" y1="519.2" x2="490.3" y2="521" stroke-width="1.3"/>
<line x1="490.4" y1="547.3" x2="492.5" y2="548.6" stroke-width="1.3"/>
<line x1="431.3" y1="175.1" x2="431.9" y2="180" stroke-width="1" stroke-opacity="0.7"/>
<line x1="435.1" y1="213.9" x2="435.7" y2="218.7" stroke-width="1" stroke-opacity="0.7"/>
<line x1="438.8" y1="251.4" x2="439.5" y2="256" stroke-width="1" stroke-opacity="0.7"/>
<line x1="442.3" y1="287.5" x2="443.1" y2="292" stroke-width="1" stroke-opacity="0.7"/>
<line x1="445.7" y1="322.4" x2="446.7" y2="326.7" stroke-width="1" stroke-opacity="0.7"/>
<line x1="449" y1="356.1" x2="450.2" y2="360.1" stroke-width="1" stroke-opacity="0.7"/>
<line x1="452.2" y1="388.7" x2="453.6" y2="392.4" stroke-width="1" stroke-opacity="0.7"/>
<line x1="455.2" y1="420.2" x2="456.8" y2="423.4" stroke-width="1" stroke-opacity="0.7"/>
<line x1="458.2" y1="450.7" x2="459.8" y2="453.3" stroke-width="1" stroke-opacity="0.7"/>
<line x1="461.1" y1="480.3" x2="462.6" y2="482.3" stroke-width="1" stroke-opacity="0.7"/>
<line x1="463.9" y1="508.9" x2="465.4" y2="510.4" stroke-width="1.3"/>
<line x1="466.6" y1="536.6" x2="468" y2="537.6" stroke-width="1.3"/>
<line x1="404.6" y1="170.7" x2="405.2" y2="175.4" stroke-width="1" stroke-opacity="0.7"/>
<line x1="408.8" y1="208.8" x2="409.4" y2="213.3" stroke-width="1" stroke-opacity="0.7"/>
<line x1="412.8" y1="245.5" x2="413.4" y2="249.9" stroke-width="1" stroke-opacity="0.7"/>
<line x1="416.7" y1="281" x2="417.4" y2="285.1" stroke-width="1" stroke-opacity="0.7"/>
<line x1="420.5" y1="315.3" x2="421.2" y2="319.2" stroke-width="1" stroke-opacity="0.7"/>
<line x1="424.1" y1="348.4" x2="424.9" y2="352" stroke-width="1" stroke-opacity="0.7"/>
<line x1="427.6" y1="380.5" x2="428.5" y2="383.6" stroke-width="1" stroke-opacity="0.7"/>
<line x1="431" y1="411.5" x2="432" y2="414.2" stroke-width="1" stroke-opacity="0.7"/>
<line x1="434.3" y1="441.6" x2="435.3" y2="443.8" stroke-width="1" stroke-opacity="0.7"/>
<line x1="437.5" y1="470.7" x2="438.4" y2="472.4" stroke-width="1" stroke-opacity="0.7"/>
<line x1="440.6" y1="498.9" x2="441.5" y2="500.1" stroke-width="1" stroke-opacity="0.7"/>
<line x1="443.6" y1="526.3" x2="444.4" y2="527" stroke-width="1.3"/>
<line x1="379" y1="166.5" x2="379.6" y2="171" stroke-width="1" stroke-opacity="0.7"/>
<line x1="383.6" y1="203.8" x2="384.1" y2="208.2" stroke-width="1" stroke-opacity="0.7"/>
<line x1="388" y1="239.9" x2="388.5" y2="244" stroke-width="1" stroke-opacity="0.7"/>
<line x1="392.2" y1="274.7" x2="392.7" y2="278.7" stroke-width="1" stroke-opacity="0.7"/>
<line x1="396.3" y1="308.4" x2="396.8" y2="312.1" stroke-width="1" stroke-opacity="0.7"/>
<line x1="400.2" y1="341" x2="400.7" y2="344.3" stroke-width="1" stroke-opacity="0.7"/>
<line x1="404.1" y1="372.6" x2="404.5" y2="375.4" stroke-width="1" stroke-opacity="0.7"/>
<line x1="407.8" y1="403.2" x2="408.2" y2="405.5" stroke-width="1" stroke-opacity="0.7"/>
<line x1="411.4" y1="432.8" x2="411.7" y2="434.7" stroke-width="1" stroke-opacity="0.7"/>
<line x1="414.9" y1="461.5" x2="415.2" y2="462.9" stroke-width="1" stroke-opacity="0.7"/>
<line x1="418.2" y1="489.3" x2="418.5" y2="490.2" stroke-width="1" stroke-opacity="0.7"/>
<line x1="421.5" y1="516.4" x2="421.7" y2="516.8" stroke-width="1" stroke-opacity="0.7"/>
</g>
<g shape-rendering="crispEdges" stroke-width="1" fill="none">
<line x1="331.5" y1="693.5" x2="300.2" y2="684.2" stroke="#f00"/>
<line x1="331.5" y1="693.5" x2="354.9" y2="680.2" stroke="#0f0"/>
<line x1="331.5" y1="693.5" x2="331.5" y2="728.8" stroke="#00f"/>
</g>
<text x="293" y="681" font-size="11" font-weight="bold" textLength="7.2" lengthAdjust="spacingAndGlyphs" fill="#f00">X</text>
<text x="353.2" y="677.1" font-size="11" font-weight="bold" textLength="6.8" lengthAdjust="spacingAndGlyphs" fill="#0f0">Y</text>
<text x="331.2" y="740.9" font-size="11" font-weight="bold" textLength="6.8" lengthAdjust="spacingAndGlyphs" fill="#00f">Z</text>
</svg>
</body></html>
